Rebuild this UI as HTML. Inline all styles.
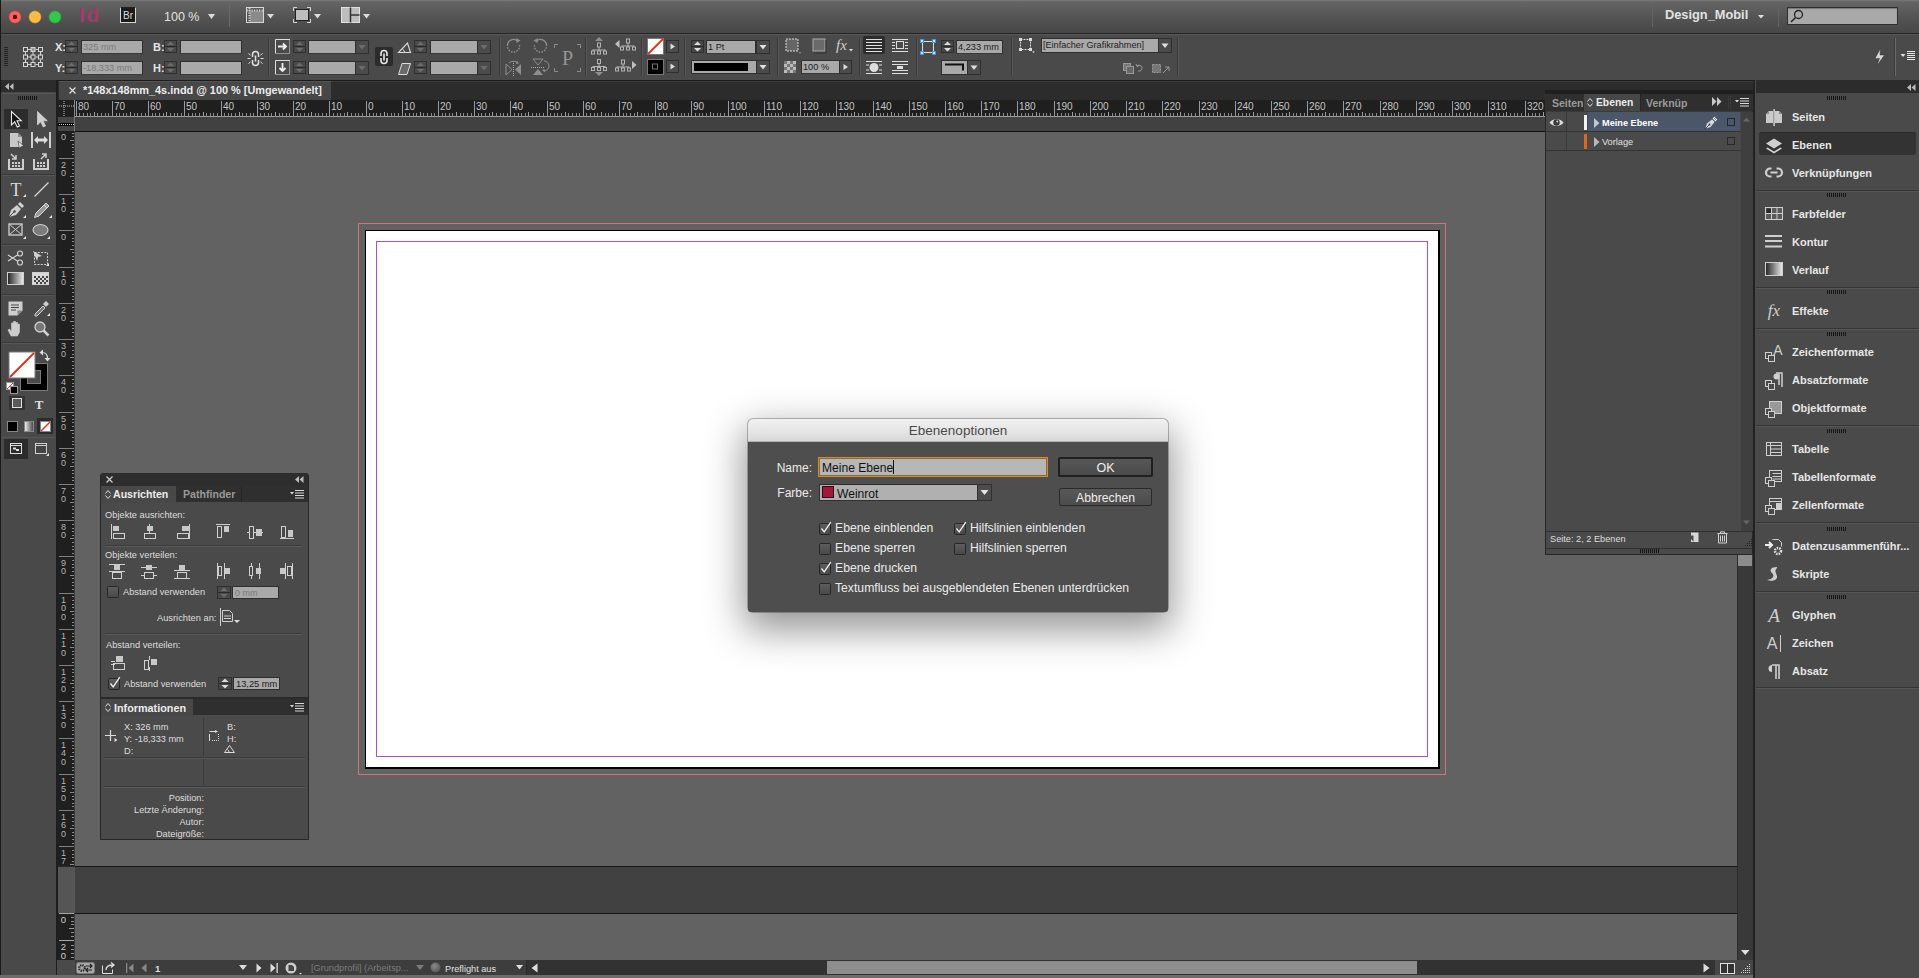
<!DOCTYPE html>
<html><head><meta charset="utf-8"><style>
*{margin:0;padding:0;box-sizing:border-box}
html,body{width:1919px;height:978px;overflow:hidden;background:#626262;font-family:"Liberation Sans",sans-serif;color:#ddd}
.a{position:absolute}
.t{position:absolute;white-space:nowrap;line-height:1}
svg{position:absolute;overflow:visible}
</style></head><body>
<div class="a" style="left:0px;top:0px;width:1919px;height:33px;background:linear-gradient(#7a7a7a 0px,#646464 2px,#5c5c5c 30%,#505050 65%,#474747 100%)"></div>
<div class="a" style="left:0px;top:33px;width:1919px;height:1px;background:#242424"></div>
<div class="a" style="left:0px;top:34px;width:1919px;height:46px;background:#4a4a4a;border-top:1px solid #585858"></div>
<div class="a" style="left:0px;top:80px;width:57px;height:898px;background:#494949;border-right:1px solid #262626;border-left:1px solid #1e1e1e"></div>
<div class="a" style="left:1px;top:80px;width:55px;height:12px;background:#2c2c2c"></div>
<svg style="left:5px;top:83px;" width="9" height="7" viewBox="0 0 9 7"><path d="M4 0L0 3.5L4 7z M8.5 0L4.5 3.5L8.5 7z" fill="#bbb"/></svg>
<div class="a" style="left:2px;top:93px;width:53px;height:1px;background:#575757"></div>
<svg style="left:18px;top:96px;" width="21" height="5" viewBox="0 0 21 5"><rect x="0" y="0" width="1" height="4" fill="#151515"/><rect x="2" y="0" width="1" height="4" fill="#151515"/><rect x="4" y="0" width="1" height="4" fill="#151515"/><rect x="6" y="0" width="1" height="4" fill="#151515"/><rect x="8" y="0" width="1" height="4" fill="#151515"/><rect x="10" y="0" width="1" height="4" fill="#151515"/><rect x="12" y="0" width="1" height="4" fill="#151515"/><rect x="14" y="0" width="1" height="4" fill="#151515"/><rect x="16" y="0" width="1" height="4" fill="#151515"/><rect x="18" y="0" width="1" height="4" fill="#151515"/></svg>
<div class="a" style="left:4px;top:109px;width:24px;height:20px;background:#2c2c2c"></div>
<svg style="left:9px;top:110px;" width="14" height="18" viewBox="0 0 14 18"><path d="M2.5 1.5v13.5l3.2-3.2 2.6 5.2 2.2-1.1-2.5-5.1h4.3z" fill="#111" stroke="#e6e6e6" stroke-width="1.1"/></svg>
<svg style="left:35px;top:110px;" width="14" height="18" viewBox="0 0 14 18"><path d="M2.5 1.5v13.5l3.2-3.2 2.6 5.2 2.2-1.1-2.5-5.1h4.3z" fill="#cfcfcf" stroke="#cfcfcf" stroke-width="0.8"/></svg>
<svg style="left:9px;top:132px;" width="16" height="17" viewBox="0 0 16 17"><path d="M1 1h8l4 4v10H1z" fill="#c8c8c8"/><path d="M9 1v4h4" fill="#8a8a8a"/><path d="M9 9l6 5-3 0.5-1.5 2.5z" fill="#e0e0e0" stroke="#333" stroke-width="0.6"/></svg>
<svg style="left:30px;top:132px;" width="22" height="16" viewBox="0 0 22 16"><rect x="1" y="0" width="2" height="16" fill="#cfcfcf"/><rect x="19" y="0" width="2" height="16" fill="#cfcfcf"/><path d="M4 8l4-4v2.5h6V4l4 4-4 4V9.5H8V12z" fill="#dcdcdc"/></svg>
<svg style="left:8px;top:153px;" width="16" height="17" viewBox="0 0 16 17"><path d="M1 6v10h14V6" fill="none" stroke="#cfcfcf" stroke-width="2"/><rect x="4" y="9" width="2" height="2" fill="#cfcfcf"/><rect x="7" y="9" width="2" height="2" fill="#cfcfcf"/><rect x="10" y="9" width="2" height="2" fill="#cfcfcf"/><rect x="4" y="12" width="2" height="2" fill="#cfcfcf"/><rect x="7" y="12" width="2" height="2" fill="#cfcfcf"/><rect x="10" y="12" width="2" height="2" fill="#cfcfcf"/><path d="M3 1l4.5 4.5 M4 6h4V2" stroke="#cfcfcf" stroke-width="1.5" fill="none"/></svg>
<svg style="left:33px;top:153px;" width="16" height="17" viewBox="0 0 16 17"><path d="M1 6v10h14V6" fill="none" stroke="#cfcfcf" stroke-width="2"/><rect x="4" y="9" width="2" height="2" fill="#cfcfcf"/><rect x="7" y="9" width="2" height="2" fill="#cfcfcf"/><rect x="10" y="9" width="2" height="2" fill="#cfcfcf"/><rect x="4" y="12" width="2" height="2" fill="#cfcfcf"/><rect x="7" y="12" width="2" height="2" fill="#cfcfcf"/><rect x="10" y="12" width="2" height="2" fill="#cfcfcf"/><path d="M8 6l5-5 M9 1h4v4" stroke="#cfcfcf" stroke-width="1.5" fill="none"/></svg>
<div class="a" style="left:2px;top:174px;width:53px;height:1px;background:#393939;border-bottom:1px solid #565656;height:2px"></div>
<svg style="left:8px;top:181px;" width="18" height="17" viewBox="0 0 18 17"><text x="8" y="14.5" font-family="Liberation Serif" font-size="18" text-anchor="middle" fill="#d8d8d8">T</text><path d="M15 16h3v-3z" fill="#e8e8e8"/></svg>
<svg style="left:33px;top:181px;" width="17" height="17" viewBox="0 0 17 17"><path d="M1.5 15.5L15.5 1.5" stroke="#d8d8d8" stroke-width="1.3"/></svg>
<svg style="left:7px;top:201px;" width="20" height="18" viewBox="0 0 20 18"><path d="M2 16L4 9l6-5 4 4-5 6z" fill="#cfcfcf"/><path d="M11 3l2-2 4 4-2 2z" fill="#d8d8d8"/><path d="M2 16l5-5" stroke="#444" stroke-width="1"/><circle cx="7.5" cy="10.5" r="1.2" fill="#444"/><path d="M16 17h3v-3z" fill="#e8e8e8"/></svg>
<svg style="left:33px;top:201px;" width="20" height="18" viewBox="0 0 20 18"><path d="M1.5 16.5l1.5-4.5L13 2l3 3L6 15z" fill="#999" stroke="#d8d8d8" stroke-width="1"/><path d="M11 4l3 3" stroke="#d8d8d8"/><path d="M16 17h3v-3z" fill="#e8e8e8"/></svg>
<svg style="left:8px;top:223px;" width="19" height="17" viewBox="0 0 19 17"><rect x="1" y="1" width="13" height="11" fill="none" stroke="#d0d0d0" stroke-width="1.3"/><path d="M1 1l13 11 M14 1L1 12" stroke="#d0d0d0" stroke-width="1"/><path d="M15 16h3v-3z" fill="#e8e8e8"/></svg>
<svg style="left:32px;top:223px;" width="19" height="17" viewBox="0 0 19 17"><ellipse cx="8.5" cy="7" rx="7.5" ry="5.5" fill="#7c7c7c" stroke="#d0d0d0" stroke-width="1.1"/><path d="M15 16h3v-3z" fill="#e8e8e8"/></svg>
<div class="a" style="left:2px;top:244px;width:53px;height:2px;background:#393939;border-bottom:1px solid #565656"></div>
<svg style="left:7px;top:250px;" width="17" height="16" viewBox="0 0 17 16"><circle cx="13" cy="3.5" r="2.5" fill="none" stroke="#d0d0d0" stroke-width="1.2"/><circle cx="13" cy="12.5" r="2.5" fill="none" stroke="#d0d0d0" stroke-width="1.2"/><path d="M10.8 4.8L1 11 M10.8 11.2L1 5" stroke="#d0d0d0" stroke-width="1.2"/></svg>
<svg style="left:32px;top:250px;" width="18" height="17" viewBox="0 0 18 17"><rect x="2.5" y="2.5" width="13" height="12" fill="none" stroke="#d0d0d0" stroke-dasharray="2 1.3"/><path d="M1 1l9 5-4 1-1 4z" fill="#cfcfcf"/><path d="M14 16h3v-3z" fill="#e8e8e8"/></svg>
<svg style="left:7px;top:272px;" width="17" height="14" viewBox="0 0 17 14"><defs><linearGradient id="gt" x1="0" x2="1"><stop offset="0" stop-color="#222"/><stop offset="1" stop-color="#eee"/></linearGradient></defs><rect x="0.5" y="0.5" width="16" height="12" fill="url(#gt)" stroke="#d0d0d0"/></svg>
<svg style="left:32px;top:272px;" width="17" height="14" viewBox="0 0 17 14"><rect x="0.5" y="0.5" width="16" height="12" fill="#d8d8d8" stroke="#d0d0d0"/><path d="M2 4h2v2H2z M6 4h2v2H6z M10 4h2v2h-2z M14 4h2v2h-2z M4 6h2v2H4z M8 6h2v2H8z M12 6h2v2h-2z M2 8h2v2H2z M6 8h2v2H6z M10 8h2v2h-2z M14 8h2v2h-2z M4 10h2v2H4z M8 10h2v2H8z M12 10h2v2h-2z" fill="#444"/></svg>
<div class="a" style="left:2px;top:294px;width:53px;height:2px;background:#393939;border-bottom:1px solid #565656"></div>
<svg style="left:8px;top:301px;" width="16" height="15" viewBox="0 0 16 15"><path d="M0.5 0.5h14v9l-5 5h-9z" fill="#cfcfcf"/><path d="M3 4h8 M3 6.5h8 M3 9h5" stroke="#444"/><path d="M9.5 14.5v-5h5" fill="#888"/></svg>
<svg style="left:33px;top:299px;" width="17" height="18" viewBox="0 0 17 18"><path d="M2 15l8-8 2 2-8 8H2z" fill="#777" stroke="#d0d0d0"/><path d="M10 5l3-3 3 3-3 3z" fill="#d0d0d0"/><path d="M14 17h3v-3z" fill="#e8e8e8"/></svg>
<svg style="left:7px;top:320px;" width="17" height="17" viewBox="0 0 17 17"><path d="M4 16l-3-6 1.5-1 2 2.5V3h2v6V1.5h2V9V2.5h2V9V4h2v8l-2 4z" fill="#cdcdcd" stroke="#cdcdcd" stroke-width="0.6" stroke-linejoin="round"/></svg>
<svg style="left:33px;top:320px;" width="17" height="17" viewBox="0 0 17 17"><circle cx="7" cy="7" r="5" fill="#777" stroke="#d0d0d0" stroke-width="1.3"/><path d="M10.5 10.5L15.5 15.5" stroke="#d0d0d0" stroke-width="2.5"/></svg>
<div class="a" style="left:2px;top:342px;width:53px;height:2px;background:#393939;border-bottom:1px solid #565656"></div>
<svg style="left:5px;top:348px;" width="48" height="48" viewBox="0 0 48 48"><rect x="15.5" y="15.5" width="27" height="27" fill="#000" stroke="#7a7a7a" stroke-width="1"/><rect x="22.5" y="22.5" width="13" height="13" fill="#4a4a4a" stroke="#7a7a7a"/><rect x="3.5" y="3.5" width="27" height="27" fill="#7a7a7a"/><rect x="4.5" y="4.5" width="25" height="25" fill="#fff"/><path d="M5 29L29 5" stroke="#e0301e" stroke-width="2"/><path d="M37 4.5q5.5 0 5.5 6" stroke="#ddd" fill="none" stroke-width="1.2"/><path d="M34.5 4.5l3.5-3v6z M42.5 13.5l-3-3.5h6z" fill="#ddd"/><rect x="1.5" y="34.5" width="7" height="7" fill="#fff" stroke="#999"/><path d="M2 41l6-6" stroke="#e0301e"/><rect x="5.5" y="38.5" width="7" height="7" fill="#000" stroke="#999"/></svg>
<div class="a" style="left:9px;top:396px;width:16px;height:14px;background:#333"></div>
<svg style="left:12px;top:398px;" width="11" height="10" viewBox="0 0 11 10"><rect x="0.5" y="0.5" width="9" height="9" fill="#5a5a5a" stroke="#e0e0e0"/></svg>
<svg style="left:33px;top:398px;" width="12" height="12" viewBox="0 0 12 12"><text x="6" y="10.5" font-family="Liberation Serif" font-weight="bold" font-size="13" text-anchor="middle" fill="#e0e0e0">T</text></svg>
<svg style="left:7px;top:421px;" width="11" height="11" viewBox="0 0 11 11"><rect x="0.5" y="0.5" width="10" height="10" fill="#000" stroke="#888"/></svg>
<svg style="left:24px;top:421px;" width="10" height="11" viewBox="0 0 10 11"><defs><linearGradient id="ga" x1="0" x2="1"><stop offset="0" stop-color="#f4f4f4"/><stop offset="1" stop-color="#444"/></linearGradient></defs><rect x="0.5" y="0.5" width="9" height="10" fill="url(#ga)" stroke="#888"/></svg>
<div class="a" style="left:37px;top:418px;width:16px;height:16px;background:#2c2c2c"></div>
<svg style="left:40px;top:421px;" width="11" height="11" viewBox="0 0 11 11"><rect x="0.5" y="0.5" width="10" height="10" fill="#fff" stroke="#888"/><path d="M1 10L10 1" stroke="#e0301e" stroke-width="1.5"/></svg>
<div class="a" style="left:2px;top:437px;width:53px;height:1px;background:#565656"></div>
<div class="a" style="left:4px;top:439px;width:24px;height:20px;background:#2c2c2c"></div>
<svg style="left:10px;top:443px;" width="13" height="11" viewBox="0 0 13 11"><rect x="0.5" y="0.5" width="11" height="10" fill="none" stroke="#e0e0e0"/><path d="M0.5 2.5h11" stroke="#e0e0e0"/><rect x="3" y="4.5" width="3" height="2" fill="#e0e0e0"/><rect x="6" y="6" width="3" height="2" fill="#e0e0e0"/></svg>
<svg style="left:35px;top:443px;" width="15" height="14" viewBox="0 0 15 14"><rect x="0.5" y="0.5" width="11" height="10" fill="#444" stroke="#d0d0d0"/><path d="M0.5 2.5h11" stroke="#d0d0d0"/><path d="M11 13h3v-3z" fill="#e0e0e0"/></svg>
<svg style="left:0px;top:0px;" width="70" height="34" viewBox="0 0 70 34"><circle cx="15" cy="17" r="6" fill="#fc615d" stroke="#df4744" stroke-width="0.6"/><circle cx="15" cy="17" r="2.2" fill="#6d0000"/><circle cx="35" cy="17" r="6" fill="#fdbc40" stroke="#de9f34" stroke-width="0.6"/><circle cx="55" cy="17" r="6" fill="#34c84a" stroke="#27aa35" stroke-width="0.6"/></svg>
<div class="a" style="left:0px;top:0px;width:1px;height:978px;background:#1a1a1a"></div>
<div class="t" style="left:79px;top:4px;font-size:21px;color:#a23a6a;font-weight:bold;letter-spacing:1.5px">Id</div>
<div class="a" style="left:120px;top:7px;width:16px;height:16px;background:#1b1b1b;border:1px solid #d6d6d6;border-top-color:#222"></div>
<div class="t" style="left:123px;top:11px;font-size:10px;color:#dcdcdc;font-weight:normal;">Br</div>
<div class="t" style="left:164px;top:11px;font-size:12.5px;color:#e2e2e2;font-weight:normal;">100 %</div>
<svg style="left:208px;top:14px;" width="8" height="6" viewBox="0 0 8 6"><path d="M0 0h7l-3.5 5z" fill="#ddd"/></svg>
<div class="a" style="left:229px;top:5px;width:1px;height:22px;background:#3e3e3e;border-right:1px solid #6a6a6a"></div>
<svg style="left:246px;top:7px;" width="28" height="17" viewBox="0 0 28 17"><rect x="0.5" y="0.5" width="17" height="15" fill="none" stroke="#d8d8d8"/><rect x="4" y="4" width="13" height="11" fill="#8a8a8a"/><path d="M0.5 3.5h17 M3.5 0.5v15" stroke="#d8d8d8" stroke-width="2.2" stroke-dasharray="1.2 1.3"/><path d="M21 7h7l-3.5 4.5z" fill="#ddd"/></svg>
<svg style="left:293px;top:7px;" width="28" height="17" viewBox="0 0 28 17"><path d="M0.5 4V0.5H4 M14 0.5h3.5V4 M17.5 12v3.5H14 M4 15.5H0.5V12" stroke="#d8d8d8" fill="none"/><rect x="2.5" y="2.5" width="13" height="11" fill="#bdbdbd" stroke="#222" stroke-width="1"/><path d="M21 7h7l-3.5 4.5z" fill="#ddd"/></svg>
<svg style="left:341px;top:7px;" width="28" height="17" viewBox="0 0 28 17"><rect x="0.5" y="0.5" width="18" height="15" fill="#bdbdbd" stroke="#e0e0e0"/><path d="M9.5 0.5v15 M9.5 8h9" stroke="#333" stroke-width="1.5"/><path d="M22 7h7l-3.5 4.5z" fill="#ddd"/></svg>
<div class="a" style="left:1652px;top:5px;width:1px;height:22px;background:#3e3e3e;border-right:1px solid #636363"></div>
<div class="t" style="left:1665px;top:9px;font-size:12.8px;color:#e2e2e2;font-weight:bold;">Design_Mobil</div>
<svg style="left:1758px;top:15px;" width="7" height="4" viewBox="0 0 7 4"><path d="M0 0h6l-3 3.5z" fill="#ddd"/></svg>
<div class="a" style="left:1778px;top:5px;width:1px;height:22px;background:#3e3e3e;border-right:1px solid #636363"></div>
<div class="a" style="left:1787px;top:7px;width:111px;height:18px;background:#a9a9a9;border:1px solid #303030;box-shadow:inset 0 1px 1px #777"></div>
<svg style="left:1790px;top:9px;" width="14" height="14" viewBox="0 0 14 14"><circle cx="8.5" cy="5.5" r="4" fill="none" stroke="#222" stroke-width="1.3"/><path d="M5.5 8.5L1 13" stroke="#222" stroke-width="1.5"/></svg>
<svg style="left:4px;top:47px;" width="5" height="20" viewBox="0 0 5 20"><rect x="0" y="0" width="4" height="1" fill="#222"/><rect x="0" y="2" width="4" height="1" fill="#222"/><rect x="0" y="4" width="4" height="1" fill="#222"/><rect x="0" y="6" width="4" height="1" fill="#222"/><rect x="0" y="8" width="4" height="1" fill="#222"/><rect x="0" y="10" width="4" height="1" fill="#222"/><rect x="0" y="12" width="4" height="1" fill="#222"/><rect x="0" y="14" width="4" height="1" fill="#222"/><rect x="0" y="16" width="4" height="1" fill="#222"/><rect x="0" y="18" width="4" height="1" fill="#222"/></svg>
<svg style="left:23px;top:47px;" width="21" height="21" viewBox="0 0 21 21"><rect x="0.5" y="0.5" width="4" height="4" fill="none" stroke="#d4d4d4" stroke-width="1"/><rect x="8.0" y="0.5" width="4" height="4" fill="#9a9a9a" stroke="#d4d4d4" stroke-width="1"/><rect x="15.5" y="0.5" width="4" height="4" fill="none" stroke="#d4d4d4" stroke-width="1"/><rect x="0.5" y="8.0" width="4" height="4" fill="none" stroke="#d4d4d4" stroke-width="1"/><rect x="8.0" y="8.0" width="4" height="4" fill="none" stroke="#d4d4d4" stroke-width="1"/><rect x="15.5" y="8.0" width="4" height="4" fill="none" stroke="#d4d4d4" stroke-width="1"/><rect x="0.5" y="15.5" width="4" height="4" fill="none" stroke="#d4d4d4" stroke-width="1"/><rect x="8.0" y="15.5" width="4" height="4" fill="none" stroke="#d4d4d4" stroke-width="1"/><rect x="15.5" y="15.5" width="4" height="4" fill="none" stroke="#d4d4d4" stroke-width="1"/><path d="M5 2.5h3.5 M12.5 2.5h3.5 M5 10h3.5 M12.5 10h3.5 M5 17.5h3.5 M12.5 17.5h3.5 M2.5 5v3.5 M2.5 12.5v3.5 M10 5v3.5 M10 12.5v3.5 M17.5 5v3.5 M17.5 12.5v3.5" stroke="#d4d4d4"/></svg>
<div class="t" style="left:55px;top:42px;font-size:11px;color:#e4e4e4;font-weight:bold;">X:</div>
<div class="t" style="left:55px;top:63px;font-size:11px;color:#e4e4e4;font-weight:bold;">Y:</div>
<svg style="left:65px;top:40px;" width="13" height="13" viewBox="0 0 13 13"><rect x="0.5" y="0.5" width="12" height="12" fill="#4a4a4a" stroke="#2f2f2f"/><path d="M3.0 5.0L6.5 1.5L10.0 5.0z M3.0 8.0L6.5 11.5L10.0 8.0z" fill="#6d6d6d"/><rect x="1" y="6.0" width="11" height="1" fill="#2a2a2a"/></svg>
<svg style="left:65px;top:61px;" width="13" height="13" viewBox="0 0 13 13"><rect x="0.5" y="0.5" width="12" height="12" fill="#4a4a4a" stroke="#2f2f2f"/><path d="M3.0 5.0L6.5 1.5L10.0 5.0z M3.0 8.0L6.5 11.5L10.0 8.0z" fill="#6d6d6d"/><rect x="1" y="6.0" width="11" height="1" fill="#2a2a2a"/></svg>
<div class="a" style="left:81px;top:40px;width:62px;height:14px;background:#a9a9a9;border:1px solid #2e2e2e;border-bottom-color:#3a3a3a"></div><div class="t" style="left:83px;top:43px;font-size:9.2px;color:#7b7b7b;font-weight:normal;">325 mm</div>
<div class="a" style="left:81px;top:61px;width:62px;height:14px;background:#a9a9a9;border:1px solid #2e2e2e;border-bottom-color:#3a3a3a"></div><div class="t" style="left:83px;top:64px;font-size:9.2px;color:#7b7b7b;font-weight:normal;">-18,333 mm</div>
<div class="t" style="left:153px;top:42px;font-size:11px;color:#e4e4e4;font-weight:bold;">B:</div>
<div class="t" style="left:153px;top:63px;font-size:11px;color:#e4e4e4;font-weight:bold;">H:</div>
<svg style="left:164px;top:40px;" width="13" height="13" viewBox="0 0 13 13"><rect x="0.5" y="0.5" width="12" height="12" fill="#4a4a4a" stroke="#2f2f2f"/><path d="M3.0 5.0L6.5 1.5L10.0 5.0z M3.0 8.0L6.5 11.5L10.0 8.0z" fill="#6d6d6d"/><rect x="1" y="6.0" width="11" height="1" fill="#2a2a2a"/></svg>
<svg style="left:164px;top:61px;" width="13" height="13" viewBox="0 0 13 13"><rect x="0.5" y="0.5" width="12" height="12" fill="#4a4a4a" stroke="#2f2f2f"/><path d="M3.0 5.0L6.5 1.5L10.0 5.0z M3.0 8.0L6.5 11.5L10.0 8.0z" fill="#6d6d6d"/><rect x="1" y="6.0" width="11" height="1" fill="#2a2a2a"/></svg>
<div class="a" style="left:180px;top:40px;width:62px;height:14px;background:#a9a9a9;border:1px solid #2e2e2e;border-bottom-color:#3a3a3a"></div>
<div class="a" style="left:180px;top:61px;width:62px;height:14px;background:#a9a9a9;border:1px solid #2e2e2e;border-bottom-color:#3a3a3a"></div>
<svg style="left:247px;top:50px;" width="17" height="17" viewBox="0 0 17 17"><path d="M5.5 7V4.5a3 3 0 0 1 6 0V7 M5.5 10v2.5a3 3 0 0 0 6 0V10 M8.5 5.5v6" fill="none" stroke="#e0e0e0" stroke-width="1.5"/><path d="M0.5 8.5h3 M13.5 8.5h3 M1.5 3.5l2 1.5 M15.5 3.5l-2 1.5 M1.5 13.5l2-1.5 M15.5 13.5l-2-1.5" stroke="#e0e0e0" stroke-width="1"/></svg>
<div class="a" style="left:268px;top:38px;width:1px;height:38px;background:#3a3a3a;border-right:1px solid #575757;width:2px"></div>
<svg style="left:275px;top:39px;" width="16" height="15" viewBox="0 0 16 15"><path d="M0.5 14.5V0.5h14.5" fill="none" stroke="#ddd"/><path d="M14.5 0.5v14h-14" fill="none" stroke="#ddd" stroke-dasharray="1 1"/><path d="M3 7.5h8 M8 4.5l3 3-3 3" stroke="#eee" stroke-width="1.8" fill="none"/></svg>
<svg style="left:275px;top:60px;" width="16" height="15" viewBox="0 0 16 15"><path d="M0.5 14.5V0.5h14.5" fill="none" stroke="#ddd"/><path d="M14.5 0.5v14h-14" fill="none" stroke="#ddd" stroke-dasharray="1 1"/><path d="M7.5 3v8 M4.5 8l3 3 3-3" stroke="#eee" stroke-width="1.8" fill="none"/></svg>
<svg style="left:293px;top:40px;" width="13" height="13" viewBox="0 0 13 13"><rect x="0.5" y="0.5" width="12" height="12" fill="#4a4a4a" stroke="#2f2f2f"/><path d="M3.0 5.0L6.5 1.5L10.0 5.0z M3.0 8.0L6.5 11.5L10.0 8.0z" fill="#6d6d6d"/><rect x="1" y="6.0" width="11" height="1" fill="#2a2a2a"/></svg>
<svg style="left:293px;top:61px;" width="13" height="13" viewBox="0 0 13 13"><rect x="0.5" y="0.5" width="12" height="12" fill="#4a4a4a" stroke="#2f2f2f"/><path d="M3.0 5.0L6.5 1.5L10.0 5.0z M3.0 8.0L6.5 11.5L10.0 8.0z" fill="#6d6d6d"/><rect x="1" y="6.0" width="11" height="1" fill="#2a2a2a"/></svg>
<div class="a" style="left:308px;top:40px;width:48px;height:14px;background:#a9a9a9;border:1px solid #2e2e2e;border-bottom-color:#3a3a3a"></div>
<svg style="left:355px;top:40px;" width="14" height="14" viewBox="0 0 14 14"><rect x="0.5" y="0.5" width="13" height="13" fill="#4b4b4b" stroke="#2e2e2e"/><path d="M3.5 5.0h7l-3.5 4.5z" fill="#6c6c6c"/></svg>
<div class="a" style="left:308px;top:61px;width:48px;height:14px;background:#a9a9a9;border:1px solid #2e2e2e;border-bottom-color:#3a3a3a"></div>
<svg style="left:355px;top:61px;" width="14" height="14" viewBox="0 0 14 14"><rect x="0.5" y="0.5" width="13" height="13" fill="#4b4b4b" stroke="#2e2e2e"/><path d="M3.5 5.0h7l-3.5 4.5z" fill="#6c6c6c"/></svg>
<div class="a" style="left:375px;top:47px;width:18px;height:19px;background:#2b2b2b;border-radius:2px"></div>
<svg style="left:378px;top:49px;" width="12" height="16" viewBox="0 0 12 16"><path d="M3 7V4.5a3 3 0 0 1 6 0V7 M3 9v2.5a3 3 0 0 0 6 0V9 M6 4.5v7" fill="none" stroke="#e6e6e6" stroke-width="1.6"/></svg>
<svg style="left:398px;top:42px;" width="13" height="11" viewBox="0 0 13 11"><path d="M0.5 10.5h12L9.5 1z" stroke="#ddd" fill="none" stroke-width="1.1"/><path d="M6.5 10.5a4 4 0 0 0-2-3.5" stroke="#ddd" fill="none"/></svg>
<svg style="left:398px;top:63px;" width="13" height="12" viewBox="0 0 13 12"><path d="M4 0.5h8.5L9 11.5H0.5z" fill="#6a6a6a" stroke="#ddd"/></svg>
<svg style="left:414px;top:40px;" width="13" height="13" viewBox="0 0 13 13"><rect x="0.5" y="0.5" width="12" height="12" fill="#4a4a4a" stroke="#2f2f2f"/><path d="M3.0 5.0L6.5 1.5L10.0 5.0z M3.0 8.0L6.5 11.5L10.0 8.0z" fill="#6d6d6d"/><rect x="1" y="6.0" width="11" height="1" fill="#2a2a2a"/></svg>
<svg style="left:414px;top:61px;" width="13" height="13" viewBox="0 0 13 13"><rect x="0.5" y="0.5" width="12" height="12" fill="#4a4a4a" stroke="#2f2f2f"/><path d="M3.0 5.0L6.5 1.5L10.0 5.0z M3.0 8.0L6.5 11.5L10.0 8.0z" fill="#6d6d6d"/><rect x="1" y="6.0" width="11" height="1" fill="#2a2a2a"/></svg>
<div class="a" style="left:430px;top:40px;width:48px;height:14px;background:#a9a9a9;border:1px solid #2e2e2e;border-bottom-color:#3a3a3a"></div>
<svg style="left:477px;top:40px;" width="14" height="14" viewBox="0 0 14 14"><rect x="0.5" y="0.5" width="13" height="13" fill="#4b4b4b" stroke="#2e2e2e"/><path d="M3.5 5.0h7l-3.5 4.5z" fill="#6c6c6c"/></svg>
<div class="a" style="left:430px;top:61px;width:48px;height:14px;background:#a9a9a9;border:1px solid #2e2e2e;border-bottom-color:#3a3a3a"></div>
<svg style="left:477px;top:61px;" width="14" height="14" viewBox="0 0 14 14"><rect x="0.5" y="0.5" width="13" height="13" fill="#4b4b4b" stroke="#2e2e2e"/><path d="M3.5 5.0h7l-3.5 4.5z" fill="#6c6c6c"/></svg>
<div class="a" style="left:499px;top:38px;width:1px;height:38px;background:#3a3a3a;border-right:1px solid #575757;width:2px"></div>
<svg style="left:505px;top:37px;" width="18" height="17" viewBox="0 0 18 17"><path d="M2.5 9a6 6 0 0 1 10-5" stroke="#8e8e8e" fill="none" stroke-width="1.3"/><path d="M11 1l4.5 2.5-4 2.5z" fill="#8e8e8e"/><path d="M14.5 8a6 6 0 0 1-12 2" stroke="#8e8e8e" fill="none" stroke-width="1.3" stroke-dasharray="1.6 1.2"/></svg>
<svg style="left:531px;top:37px;" width="18" height="17" viewBox="0 0 18 17"><path d="M15.5 9a6 6 0 0 0-10-5" stroke="#8e8e8e" fill="none" stroke-width="1.3"/><path d="M7 1L2.5 3.5l4 2.5z" fill="#8e8e8e"/><path d="M3.5 8a6 6 0 0 0 12 2" stroke="#8e8e8e" fill="none" stroke-width="1.3" stroke-dasharray="1.6 1.2"/></svg>
<svg style="left:505px;top:58px;" width="18" height="18" viewBox="0 0 18 18"><path d="M1 6l6 5.5L1 17z" fill="none" stroke="#8e8e8e"/><path d="M16 6l-6 5.5 6 5.5z" fill="#8e8e8e"/><path d="M8.5 3v15" stroke="#aaa" stroke-dasharray="1 1"/><path d="M4 5a5 3 0 0 1 9 0" stroke="#8e8e8e" fill="none"/><path d="M12 2.5l2 3-3 0.5z" fill="#8e8e8e"/></svg>
<svg style="left:531px;top:58px;" width="18" height="18" viewBox="0 0 18 18"><path d="M2 1h10l-5 6z" fill="none" stroke="#8e8e8e"/><path d="M2 17h10l-5-6z" fill="#8e8e8e"/><path d="M0 9.5h14" stroke="#aaa" stroke-dasharray="1 1"/><path d="M13 3a5 5 0 0 1 0 10" stroke="#8e8e8e" fill="none"/><path d="M11 12l3 2.5-0.5-3.5z" fill="#8e8e8e"/></svg>
<svg style="left:554px;top:44px;" width="27" height="28" viewBox="0 0 27 28"><path d="M0.5 4V0.5H4 M23 0.5h3.5V4 M26.5 24v3.5H23 M4 27.5H0.5V24" stroke="#8e8e8e" fill="none"/><text x="13.5" y="21" text-anchor="middle" font-family="Liberation Serif" font-size="20" fill="#949494">P</text></svg>
<div class="a" style="left:585px;top:38px;width:1px;height:38px;background:#3a3a3a;border-right:1px solid #575757;width:2px"></div>
<svg style="left:591px;top:37px;" width="16" height="18" viewBox="0 0 16 18"><path d="M4 4h8L8 0z" fill="#8e8e8e"/><g transform="translate(0 5.5)"><rect x="6.5" y="0.5" width="3" height="4" fill="none" stroke="#b4b4b4"/><path d="M8 4.5v2.5 M2 7.5h12 M2 7v1.5 M8 7v1.5 M14 7v1.5" stroke="#b4b4b4"/><rect x="0.5" y="8.5" width="3" height="3" fill="none" stroke="#b4b4b4"/><rect x="6.5" y="8.5" width="3" height="3" fill="none" stroke="#b4b4b4"/><rect x="12.5" y="8.5" width="3" height="3" fill="none" stroke="#b4b4b4"/></g></svg>
<svg style="left:591px;top:59px;" width="16" height="18" viewBox="0 0 16 18"><g transform="translate(0 0)"><rect x="6.5" y="0.5" width="3" height="4" fill="none" stroke="#b4b4b4"/><path d="M8 4.5v2.5 M2 7.5h12 M2 7v1.5 M8 7v1.5 M14 7v1.5" stroke="#b4b4b4"/><rect x="0.5" y="8.5" width="3" height="3" fill="none" stroke="#b4b4b4"/><rect x="6.5" y="8.5" width="3" height="3" fill="none" stroke="#b4b4b4"/><rect x="12.5" y="8.5" width="3" height="3" fill="none" stroke="#b4b4b4"/></g><path d="M4 13h8l-4 4z" fill="#8e8e8e"/></svg>
<svg style="left:615px;top:38px;" width="22" height="13" viewBox="0 0 22 13"><path d="M0 6l4.5-4v8z" fill="#c0c0c0"/><g transform="translate(5 0.5)"><rect x="6.5" y="0.5" width="3" height="4" fill="none" stroke="#b4b4b4"/><path d="M8 4.5v2.5 M2 7.5h12 M2 7v1.5 M8 7v1.5 M14 7v1.5" stroke="#b4b4b4"/><rect x="0.5" y="8.5" width="3" height="3" fill="none" stroke="#b4b4b4"/><rect x="6.5" y="8.5" width="3" height="3" fill="none" stroke="#b4b4b4"/><rect x="12.5" y="8.5" width="3" height="3" fill="none" stroke="#b4b4b4"/></g></svg>
<svg style="left:615px;top:59px;" width="22" height="13" viewBox="0 0 22 13"><g transform="translate(0 0.5)"><rect x="6.5" y="0.5" width="3" height="4" fill="none" stroke="#b4b4b4"/><path d="M8 4.5v2.5 M2 7.5h12 M2 7v1.5 M8 7v1.5 M14 7v1.5" stroke="#b4b4b4"/><rect x="0.5" y="8.5" width="3" height="3" fill="none" stroke="#b4b4b4"/><rect x="6.5" y="8.5" width="3" height="3" fill="none" stroke="#b4b4b4"/><rect x="12.5" y="8.5" width="3" height="3" fill="none" stroke="#b4b4b4"/></g><path d="M21.5 6l-4.5-4v8z" fill="#c0c0c0"/></svg>
<div class="a" style="left:641px;top:38px;width:1px;height:38px;background:#3a3a3a;border-right:1px solid #575757;width:2px"></div>
<svg style="left:647px;top:38px;" width="17" height="17" viewBox="0 0 17 17"><rect x="0.5" y="0.5" width="16" height="16" fill="#fff" stroke="#777"/><path d="M1 16L16 1" stroke="#e0301e" stroke-width="1.8"/></svg>
<svg style="left:666px;top:40px;" width="13" height="13" viewBox="0 0 13 13"><rect x="0.5" y="0.5" width="12" height="12" fill="#4b4b4b" stroke="#2e2e2e"/><path d="M4.5 3.5L9 6.5L4.5 9.5z" fill="#ddd"/></svg>
<svg style="left:647px;top:59px;" width="17" height="16" viewBox="0 0 17 16"><rect x="0.5" y="0.5" width="16" height="15" fill="#000" stroke="#777"/><rect x="5.5" y="5" width="5" height="5" fill="none" stroke="#777"/></svg>
<svg style="left:666px;top:60px;" width="13" height="13" viewBox="0 0 13 13"><rect x="0.5" y="0.5" width="12" height="12" fill="#4b4b4b" stroke="#2e2e2e"/><path d="M4.5 3.5L9 6.5L4.5 9.5z" fill="#ddd"/></svg>
<div class="a" style="left:684px;top:38px;width:1px;height:38px;background:#3a3a3a;border-right:1px solid #575757;width:2px"></div>
<svg style="left:691px;top:40px;" width="13" height="13" viewBox="0 0 13 13"><rect x="0.5" y="0.5" width="12" height="12" fill="#474747" stroke="#2f2f2f"/><path d="M3.0 5.0L6.5 1.5L10.0 5.0z M3.0 8.0L6.5 11.5L10.0 8.0z" fill="#dcdcdc"/><rect x="1" y="6.0" width="11" height="1" fill="#2a2a2a"/></svg>
<div class="a" style="left:706px;top:40px;width:50px;height:14px;background:#a9a9a9;border:1px solid #2e2e2e;border-bottom-color:#3a3a3a"></div><div class="t" style="left:708px;top:43px;font-size:9.2px;color:#1d1d1d;font-weight:normal;">1 Pt</div>
<svg style="left:756px;top:40px;" width="14" height="14" viewBox="0 0 14 14"><rect x="0.5" y="0.5" width="13" height="13" fill="#4b4b4b" stroke="#2e2e2e"/><path d="M3.5 5.0h7l-3.5 4.5z" fill="#e0e0e0"/></svg>
<div class="a" style="left:691px;top:60px;width:66px;height:14px;background:#a9a9a9;border:1px solid #2e2e2e"></div>
<div class="a" style="left:694px;top:63px;width:54px;height:8px;background:#000"></div>
<svg style="left:756px;top:60px;" width="14" height="14" viewBox="0 0 14 14"><rect x="0.5" y="0.5" width="13" height="13" fill="#4b4b4b" stroke="#2e2e2e"/><path d="M3.5 5.0h7l-3.5 4.5z" fill="#e0e0e0"/></svg>
<div class="a" style="left:777px;top:38px;width:1px;height:38px;background:#3a3a3a;border-right:1px solid #575757;width:2px"></div>
<svg style="left:785px;top:38px;" width="17" height="16" viewBox="0 0 17 16"><rect x="1" y="1" width="12" height="12" fill="#666" stroke="#ddd" stroke-dasharray="2 1"/><path d="M14 14.5h2l-1 1z" fill="#ddd"/></svg>
<svg style="left:812px;top:38px;" width="16" height="16" viewBox="0 0 16 16"><rect x="1" y="1" width="12" height="12" fill="#6a6a6a" stroke="#aaa"/><path d="M14 2v13H2" stroke="#333" stroke-width="1.5" fill="none" opacity="0.7"/></svg>
<div class="t" style="left:836px;top:38px;font-size:15px;color:#cfcfcf;font-weight:normal;font-style:italic;font-family:'Liberation Serif'">fx</div>
<svg style="left:849px;top:49px;" width="4" height="3" viewBox="0 0 4 3"><path d="M0 0h4l-2 2.5z" fill="#ddd"/></svg>
<svg style="left:784px;top:61px;" width="12" height="12" viewBox="0 0 12 12"><rect x="0" y="0" width="12" height="12" fill="#bbb"/><path d="M0 0h3v3H0z M6 0h3v3H6z M3 3h3v3H3z M9 3h3v3H9z M0 6h3v3H0z M6 6h3v3H6z M3 9h3v3H3z M9 9h3v3H9z" fill="#777"/></svg>
<div class="a" style="left:801px;top:60px;width:39px;height:14px;background:#a9a9a9;border:1px solid #2e2e2e;border-bottom-color:#3a3a3a"></div><div class="t" style="left:803px;top:63px;font-size:9.2px;color:#1d1d1d;font-weight:normal;">100 %</div>
<svg style="left:839px;top:60px;" width="13" height="14" viewBox="0 0 13 14"><rect x="0.5" y="0.5" width="12" height="13" fill="#4b4b4b" stroke="#2e2e2e"/><path d="M4.5 4L9 7L4.5 10z" fill="#ddd"/></svg>
<div class="a" style="left:859px;top:38px;width:1px;height:38px;background:#3a3a3a;border-right:1px solid #575757;width:2px"></div>
<div class="a" style="left:863px;top:36px;width:22px;height:18px;background:#2c2c2c;border-radius:2px"></div>
<svg style="left:866px;top:38px;" width="16" height="14" viewBox="0 0 16 14"><path d="M0 1.5h16 M0 4.5h16 M0 7.5h16 M0 10.5h16 M0 13.5h16" stroke="#e0e0e0" stroke-width="1.2"/></svg>
<svg style="left:892px;top:38px;" width="16" height="14" viewBox="0 0 16 14"><path d="M0 1.5h16 M0 13.5h16 M0 4.5h3 M13 4.5h3 M0 7.5h3 M13 7.5h3 M0 10.5h3 M13 10.5h3" stroke="#ddd" stroke-width="1.2"/><rect x="4.5" y="3.5" width="7" height="7" fill="none" stroke="#ddd"/></svg>
<svg style="left:866px;top:60px;" width="16" height="15" viewBox="0 0 16 15"><path d="M0 1.5h16 M0 13.5h16" stroke="#ddd" stroke-width="1.2"/><circle cx="8" cy="7.5" r="4.5" fill="#ddd"/><path d="M0 5h3 M13 5h3 M0 10h3 M13 10h3" stroke="#ddd"/></svg>
<svg style="left:892px;top:60px;" width="16" height="15" viewBox="0 0 16 15"><path d="M0 1.5h16 M0 4.5h16 M0 10.5h16 M0 13.5h16" stroke="#ddd" stroke-width="1.2"/><rect x="5" y="6" width="6" height="3" fill="#ddd"/></svg>
<div class="a" style="left:916px;top:38px;width:1px;height:38px;background:#3a3a3a;border-right:1px solid #575757;width:2px"></div>
<svg style="left:920px;top:39px;" width="16" height="16" viewBox="0 0 16 16"><rect x="2.5" y="2.5" width="11" height="11" fill="none" stroke="#ddd"/><rect x="0" y="0" width="4" height="4" fill="#3d9ae8"/><rect x="12" y="0" width="4" height="4" fill="#3d9ae8"/><rect x="0" y="12" width="4" height="4" fill="#3d9ae8"/><rect x="12" y="12" width="4" height="4" fill="#3d9ae8"/><rect x="1" y="1" width="2" height="2" fill="#bfe0ff"/><rect x="13" y="1" width="2" height="2" fill="#bfe0ff"/><rect x="1" y="13" width="2" height="2" fill="#bfe0ff"/><rect x="13" y="13" width="2" height="2" fill="#bfe0ff"/></svg>
<svg style="left:941px;top:40px;" width="13" height="13" viewBox="0 0 13 13"><rect x="0.5" y="0.5" width="12" height="12" fill="#474747" stroke="#2f2f2f"/><path d="M3.0 5.0L6.5 1.5L10.0 5.0z M3.0 8.0L6.5 11.5L10.0 8.0z" fill="#dcdcdc"/><rect x="1" y="6.0" width="11" height="1" fill="#2a2a2a"/></svg>
<div class="a" style="left:956px;top:40px;width:47px;height:14px;background:#a9a9a9;border:1px solid #2e2e2e;border-bottom-color:#3a3a3a"></div><div class="t" style="left:958px;top:43px;font-size:9.2px;color:#1d1d1d;font-weight:normal;">4,233 mm</div>
<svg style="left:941px;top:60px;" width="40" height="15" viewBox="0 0 40 15"><rect x="0.5" y="0.5" width="26" height="14" fill="#a9a9a9" stroke="#2e2e2e"/><path d="M4 4.5h18v6" stroke="#111" stroke-width="2" fill="none"/><rect x="26.5" y="0.5" width="13" height="14" fill="#4b4b4b" stroke="#2e2e2e"/><path d="M29.5 5.5h7l-3.5 4.5z" fill="#ddd"/></svg>
<div class="a" style="left:1011px;top:38px;width:1px;height:38px;background:#3a3a3a;border-right:1px solid #575757;width:2px"></div>
<svg style="left:1019px;top:38px;" width="18" height="16" viewBox="0 0 18 16"><rect x="1.5" y="1.5" width="10" height="10" fill="none" stroke="#ddd" stroke-dasharray="2 1"/><rect x="0" y="0" width="3" height="3" fill="#ddd"/><rect x="10" y="0" width="3" height="3" fill="#ddd"/><rect x="0" y="10" width="3" height="3" fill="#ddd"/><rect x="10" y="10" width="3" height="3" fill="#ddd"/><path d="M13 13.5h3l-1.5 1.5z" fill="#ddd"/></svg>
<div class="a" style="left:1041px;top:38px;width:131px;height:15px;background:#a9a9a9;border:1px solid #2e2e2e"></div>
<div class="t" style="left:1043px;top:41px;font-size:9.1px;color:#1d1d1d;font-weight:normal;">[Einfacher Grafikrahmen]</div>
<svg style="left:1158px;top:38px;" width="14" height="15" viewBox="0 0 14 15"><rect x="0.5" y="0.5" width="13" height="14" fill="#4b4b4b" stroke="#2e2e2e"/><path d="M3.5 5.5h7l-3.5 4.5z" fill="#e0e0e0"/></svg>
<svg style="left:1122px;top:62px;" width="24" height="13" viewBox="0 0 24 13"><rect x="1.5" y="1.5" width="7" height="7" fill="#777" stroke="#999"/><rect x="4.5" y="4.5" width="7" height="7" fill="#666" stroke="#999"/><path d="M16 9a3 3 0 1 0-1-5 M14 2l1 2.5 2.5-1" stroke="#999" fill="none"/></svg>
<svg style="left:1151px;top:62px;" width="20" height="13" viewBox="0 0 20 13"><rect x="1.5" y="2.5" width="8" height="8" fill="#777" stroke="#999" stroke-dasharray="2 1"/><path d="M12 11l6-6 M14 5h4v4" stroke="#999" fill="none"/></svg>
<div class="a" style="left:1177px;top:38px;width:1px;height:38px;background:#3a3a3a;border-right:1px solid #575757;width:2px"></div>
<svg style="left:1874px;top:48px;" width="12" height="18" viewBox="0 0 12 18"><path d="M6.5 0.5L1 10.5h4.5L3 17.5 10.5 7H6z" fill="#d8d8d8" stroke="#222" stroke-width="0.4"/></svg>
<div class="a" style="left:1894px;top:38px;width:1px;height:38px;background:#6a6a6a;border-left:1px solid #3a3a3a;width:2px"></div>
<svg style="left:1900px;top:51px;" width="16" height="10" viewBox="0 0 16 10"><path d="M0.5 3h5l-2.5 3z" fill="#e0e0e0"/><path d="M7 0.5h8 M7 2.5h8 M7 4.5h8 M7 6.5h8 M7 8.5h8" stroke="#e8e8e8" stroke-width="1"/></svg>
<div class="a" style="left:57px;top:80px;width:1697px;height:20px;background:#2c2c2c;border-top:1px solid #1c1c1c"></div>
<div class="a" style="left:57px;top:81px;width:1697px;height:1px;background:#3a3a3a"></div>
<div class="a" style="left:59px;top:81px;width:272px;height:19px;background:#474747;border-top:1px solid #555"></div>
<svg style="left:69px;top:87px;" width="7" height="7" viewBox="0 0 7 7"><path d="M0.5 0.5l6 6 M6.5 0.5l-6 6" stroke="#e0e0e0" stroke-width="1.2"/></svg>
<div class="t" style="left:83px;top:85px;font-size:10.9px;color:#ececec;font-weight:bold;">*148x148mm_4s.indd @ 100 % [Umgewandelt]</div>
<svg style="left:58px;top:100px;" width="1488" height="17" viewBox="0 0 1488 17"><rect x="0" y="0" width="1488" height="17" fill="#1f1f1f"/><rect x="0" y="16" width="1488" height="1" fill="#9d9d9d"/><rect x="18" y="1" width="1" height="15" fill="#9a9a9a"/><text x="20" y="10" font-size="10" fill="#c4c4c4" font-family="Liberation Sans">80</text><rect x="21" y="13" width="1" height="3" fill="#8c8c8c"/><rect x="25" y="13" width="1" height="3" fill="#8c8c8c"/><rect x="29" y="13" width="1" height="3" fill="#8c8c8c"/><rect x="32" y="13" width="1" height="3" fill="#8c8c8c"/><rect x="36" y="12" width="1" height="4" fill="#a0a0a0"/><rect x="39" y="13" width="1" height="3" fill="#8c8c8c"/><rect x="43" y="13" width="1" height="3" fill="#8c8c8c"/><rect x="47" y="13" width="1" height="3" fill="#8c8c8c"/><rect x="50" y="13" width="1" height="3" fill="#8c8c8c"/><rect x="54" y="1" width="1" height="15" fill="#9a9a9a"/><text x="56" y="10" font-size="10" fill="#c4c4c4" font-family="Liberation Sans">70</text><rect x="58" y="13" width="1" height="3" fill="#8c8c8c"/><rect x="61" y="13" width="1" height="3" fill="#8c8c8c"/><rect x="65" y="13" width="1" height="3" fill="#8c8c8c"/><rect x="68" y="13" width="1" height="3" fill="#8c8c8c"/><rect x="72" y="12" width="1" height="4" fill="#a0a0a0"/><rect x="76" y="13" width="1" height="3" fill="#8c8c8c"/><rect x="79" y="13" width="1" height="3" fill="#8c8c8c"/><rect x="83" y="13" width="1" height="3" fill="#8c8c8c"/><rect x="87" y="13" width="1" height="3" fill="#8c8c8c"/><rect x="90" y="1" width="1" height="15" fill="#9a9a9a"/><text x="92" y="10" font-size="10" fill="#c4c4c4" font-family="Liberation Sans">60</text><rect x="94" y="13" width="1" height="3" fill="#8c8c8c"/><rect x="97" y="13" width="1" height="3" fill="#8c8c8c"/><rect x="101" y="13" width="1" height="3" fill="#8c8c8c"/><rect x="105" y="13" width="1" height="3" fill="#8c8c8c"/><rect x="108" y="12" width="1" height="4" fill="#a0a0a0"/><rect x="112" y="13" width="1" height="3" fill="#8c8c8c"/><rect x="116" y="13" width="1" height="3" fill="#8c8c8c"/><rect x="119" y="13" width="1" height="3" fill="#8c8c8c"/><rect x="123" y="13" width="1" height="3" fill="#8c8c8c"/><rect x="126" y="1" width="1" height="15" fill="#9a9a9a"/><text x="128" y="10" font-size="10" fill="#c4c4c4" font-family="Liberation Sans">50</text><rect x="130" y="13" width="1" height="3" fill="#8c8c8c"/><rect x="134" y="13" width="1" height="3" fill="#8c8c8c"/><rect x="137" y="13" width="1" height="3" fill="#8c8c8c"/><rect x="141" y="13" width="1" height="3" fill="#8c8c8c"/><rect x="145" y="12" width="1" height="4" fill="#a0a0a0"/><rect x="148" y="13" width="1" height="3" fill="#8c8c8c"/><rect x="152" y="13" width="1" height="3" fill="#8c8c8c"/><rect x="155" y="13" width="1" height="3" fill="#8c8c8c"/><rect x="159" y="13" width="1" height="3" fill="#8c8c8c"/><rect x="163" y="1" width="1" height="15" fill="#9a9a9a"/><text x="165" y="10" font-size="10" fill="#c4c4c4" font-family="Liberation Sans">40</text><rect x="166" y="13" width="1" height="3" fill="#8c8c8c"/><rect x="170" y="13" width="1" height="3" fill="#8c8c8c"/><rect x="173" y="13" width="1" height="3" fill="#8c8c8c"/><rect x="177" y="13" width="1" height="3" fill="#8c8c8c"/><rect x="181" y="12" width="1" height="4" fill="#a0a0a0"/><rect x="184" y="13" width="1" height="3" fill="#8c8c8c"/><rect x="188" y="13" width="1" height="3" fill="#8c8c8c"/><rect x="192" y="13" width="1" height="3" fill="#8c8c8c"/><rect x="195" y="13" width="1" height="3" fill="#8c8c8c"/><rect x="199" y="1" width="1" height="15" fill="#9a9a9a"/><text x="201" y="10" font-size="10" fill="#c4c4c4" font-family="Liberation Sans">30</text><rect x="202" y="13" width="1" height="3" fill="#8c8c8c"/><rect x="206" y="13" width="1" height="3" fill="#8c8c8c"/><rect x="210" y="13" width="1" height="3" fill="#8c8c8c"/><rect x="213" y="13" width="1" height="3" fill="#8c8c8c"/><rect x="217" y="12" width="1" height="4" fill="#a0a0a0"/><rect x="221" y="13" width="1" height="3" fill="#8c8c8c"/><rect x="224" y="13" width="1" height="3" fill="#8c8c8c"/><rect x="228" y="13" width="1" height="3" fill="#8c8c8c"/><rect x="231" y="13" width="1" height="3" fill="#8c8c8c"/><rect x="235" y="1" width="1" height="15" fill="#9a9a9a"/><text x="237" y="10" font-size="10" fill="#c4c4c4" font-family="Liberation Sans">20</text><rect x="239" y="13" width="1" height="3" fill="#8c8c8c"/><rect x="242" y="13" width="1" height="3" fill="#8c8c8c"/><rect x="246" y="13" width="1" height="3" fill="#8c8c8c"/><rect x="250" y="13" width="1" height="3" fill="#8c8c8c"/><rect x="253" y="12" width="1" height="4" fill="#a0a0a0"/><rect x="257" y="13" width="1" height="3" fill="#8c8c8c"/><rect x="260" y="13" width="1" height="3" fill="#8c8c8c"/><rect x="264" y="13" width="1" height="3" fill="#8c8c8c"/><rect x="268" y="13" width="1" height="3" fill="#8c8c8c"/><rect x="271" y="1" width="1" height="15" fill="#9a9a9a"/><text x="273" y="10" font-size="10" fill="#c4c4c4" font-family="Liberation Sans">10</text><rect x="275" y="13" width="1" height="3" fill="#8c8c8c"/><rect x="279" y="13" width="1" height="3" fill="#8c8c8c"/><rect x="282" y="13" width="1" height="3" fill="#8c8c8c"/><rect x="286" y="13" width="1" height="3" fill="#8c8c8c"/><rect x="289" y="12" width="1" height="4" fill="#a0a0a0"/><rect x="293" y="13" width="1" height="3" fill="#8c8c8c"/><rect x="297" y="13" width="1" height="3" fill="#8c8c8c"/><rect x="300" y="13" width="1" height="3" fill="#8c8c8c"/><rect x="304" y="13" width="1" height="3" fill="#8c8c8c"/><rect x="308" y="1" width="1" height="15" fill="#9a9a9a"/><text x="310" y="10" font-size="10" fill="#c4c4c4" font-family="Liberation Sans">0</text><rect x="311" y="13" width="1" height="3" fill="#8c8c8c"/><rect x="315" y="13" width="1" height="3" fill="#8c8c8c"/><rect x="318" y="13" width="1" height="3" fill="#8c8c8c"/><rect x="322" y="13" width="1" height="3" fill="#8c8c8c"/><rect x="326" y="12" width="1" height="4" fill="#a0a0a0"/><rect x="329" y="13" width="1" height="3" fill="#8c8c8c"/><rect x="333" y="13" width="1" height="3" fill="#8c8c8c"/><rect x="336" y="13" width="1" height="3" fill="#8c8c8c"/><rect x="340" y="13" width="1" height="3" fill="#8c8c8c"/><rect x="344" y="1" width="1" height="15" fill="#9a9a9a"/><text x="346" y="10" font-size="10" fill="#c4c4c4" font-family="Liberation Sans">10</text><rect x="347" y="13" width="1" height="3" fill="#8c8c8c"/><rect x="351" y="13" width="1" height="3" fill="#8c8c8c"/><rect x="355" y="13" width="1" height="3" fill="#8c8c8c"/><rect x="358" y="13" width="1" height="3" fill="#8c8c8c"/><rect x="362" y="12" width="1" height="4" fill="#a0a0a0"/><rect x="365" y="13" width="1" height="3" fill="#8c8c8c"/><rect x="369" y="13" width="1" height="3" fill="#8c8c8c"/><rect x="373" y="13" width="1" height="3" fill="#8c8c8c"/><rect x="376" y="13" width="1" height="3" fill="#8c8c8c"/><rect x="380" y="1" width="1" height="15" fill="#9a9a9a"/><text x="382" y="10" font-size="10" fill="#c4c4c4" font-family="Liberation Sans">20</text><rect x="384" y="13" width="1" height="3" fill="#8c8c8c"/><rect x="387" y="13" width="1" height="3" fill="#8c8c8c"/><rect x="391" y="13" width="1" height="3" fill="#8c8c8c"/><rect x="394" y="13" width="1" height="3" fill="#8c8c8c"/><rect x="398" y="12" width="1" height="4" fill="#a0a0a0"/><rect x="402" y="13" width="1" height="3" fill="#8c8c8c"/><rect x="405" y="13" width="1" height="3" fill="#8c8c8c"/><rect x="409" y="13" width="1" height="3" fill="#8c8c8c"/><rect x="413" y="13" width="1" height="3" fill="#8c8c8c"/><rect x="416" y="1" width="1" height="15" fill="#9a9a9a"/><text x="418" y="10" font-size="10" fill="#c4c4c4" font-family="Liberation Sans">30</text><rect x="420" y="13" width="1" height="3" fill="#8c8c8c"/><rect x="423" y="13" width="1" height="3" fill="#8c8c8c"/><rect x="427" y="13" width="1" height="3" fill="#8c8c8c"/><rect x="431" y="13" width="1" height="3" fill="#8c8c8c"/><rect x="434" y="12" width="1" height="4" fill="#a0a0a0"/><rect x="438" y="13" width="1" height="3" fill="#8c8c8c"/><rect x="442" y="13" width="1" height="3" fill="#8c8c8c"/><rect x="445" y="13" width="1" height="3" fill="#8c8c8c"/><rect x="449" y="13" width="1" height="3" fill="#8c8c8c"/><rect x="452" y="1" width="1" height="15" fill="#9a9a9a"/><text x="454" y="10" font-size="10" fill="#c4c4c4" font-family="Liberation Sans">40</text><rect x="456" y="13" width="1" height="3" fill="#8c8c8c"/><rect x="460" y="13" width="1" height="3" fill="#8c8c8c"/><rect x="463" y="13" width="1" height="3" fill="#8c8c8c"/><rect x="467" y="13" width="1" height="3" fill="#8c8c8c"/><rect x="470" y="12" width="1" height="4" fill="#a0a0a0"/><rect x="474" y="13" width="1" height="3" fill="#8c8c8c"/><rect x="478" y="13" width="1" height="3" fill="#8c8c8c"/><rect x="481" y="13" width="1" height="3" fill="#8c8c8c"/><rect x="485" y="13" width="1" height="3" fill="#8c8c8c"/><rect x="489" y="1" width="1" height="15" fill="#9a9a9a"/><text x="491" y="10" font-size="10" fill="#c4c4c4" font-family="Liberation Sans">50</text><rect x="492" y="13" width="1" height="3" fill="#8c8c8c"/><rect x="496" y="13" width="1" height="3" fill="#8c8c8c"/><rect x="499" y="13" width="1" height="3" fill="#8c8c8c"/><rect x="503" y="13" width="1" height="3" fill="#8c8c8c"/><rect x="507" y="12" width="1" height="4" fill="#a0a0a0"/><rect x="510" y="13" width="1" height="3" fill="#8c8c8c"/><rect x="514" y="13" width="1" height="3" fill="#8c8c8c"/><rect x="518" y="13" width="1" height="3" fill="#8c8c8c"/><rect x="521" y="13" width="1" height="3" fill="#8c8c8c"/><rect x="525" y="1" width="1" height="15" fill="#9a9a9a"/><text x="527" y="10" font-size="10" fill="#c4c4c4" font-family="Liberation Sans">60</text><rect x="528" y="13" width="1" height="3" fill="#8c8c8c"/><rect x="532" y="13" width="1" height="3" fill="#8c8c8c"/><rect x="536" y="13" width="1" height="3" fill="#8c8c8c"/><rect x="539" y="13" width="1" height="3" fill="#8c8c8c"/><rect x="543" y="12" width="1" height="4" fill="#a0a0a0"/><rect x="547" y="13" width="1" height="3" fill="#8c8c8c"/><rect x="550" y="13" width="1" height="3" fill="#8c8c8c"/><rect x="554" y="13" width="1" height="3" fill="#8c8c8c"/><rect x="557" y="13" width="1" height="3" fill="#8c8c8c"/><rect x="561" y="1" width="1" height="15" fill="#9a9a9a"/><text x="563" y="10" font-size="10" fill="#c4c4c4" font-family="Liberation Sans">70</text><rect x="565" y="13" width="1" height="3" fill="#8c8c8c"/><rect x="568" y="13" width="1" height="3" fill="#8c8c8c"/><rect x="572" y="13" width="1" height="3" fill="#8c8c8c"/><rect x="576" y="13" width="1" height="3" fill="#8c8c8c"/><rect x="579" y="12" width="1" height="4" fill="#a0a0a0"/><rect x="583" y="13" width="1" height="3" fill="#8c8c8c"/><rect x="586" y="13" width="1" height="3" fill="#8c8c8c"/><rect x="590" y="13" width="1" height="3" fill="#8c8c8c"/><rect x="594" y="13" width="1" height="3" fill="#8c8c8c"/><rect x="597" y="1" width="1" height="15" fill="#9a9a9a"/><text x="599" y="10" font-size="10" fill="#c4c4c4" font-family="Liberation Sans">80</text><rect x="601" y="13" width="1" height="3" fill="#8c8c8c"/><rect x="605" y="13" width="1" height="3" fill="#8c8c8c"/><rect x="608" y="13" width="1" height="3" fill="#8c8c8c"/><rect x="612" y="13" width="1" height="3" fill="#8c8c8c"/><rect x="615" y="12" width="1" height="4" fill="#a0a0a0"/><rect x="619" y="13" width="1" height="3" fill="#8c8c8c"/><rect x="623" y="13" width="1" height="3" fill="#8c8c8c"/><rect x="626" y="13" width="1" height="3" fill="#8c8c8c"/><rect x="630" y="13" width="1" height="3" fill="#8c8c8c"/><rect x="633" y="1" width="1" height="15" fill="#9a9a9a"/><text x="635" y="10" font-size="10" fill="#c4c4c4" font-family="Liberation Sans">90</text><rect x="637" y="13" width="1" height="3" fill="#8c8c8c"/><rect x="641" y="13" width="1" height="3" fill="#8c8c8c"/><rect x="644" y="13" width="1" height="3" fill="#8c8c8c"/><rect x="648" y="13" width="1" height="3" fill="#8c8c8c"/><rect x="652" y="12" width="1" height="4" fill="#a0a0a0"/><rect x="655" y="13" width="1" height="3" fill="#8c8c8c"/><rect x="659" y="13" width="1" height="3" fill="#8c8c8c"/><rect x="662" y="13" width="1" height="3" fill="#8c8c8c"/><rect x="666" y="13" width="1" height="3" fill="#8c8c8c"/><rect x="670" y="1" width="1" height="15" fill="#9a9a9a"/><text x="672" y="10" font-size="10" fill="#c4c4c4" font-family="Liberation Sans">100</text><rect x="673" y="13" width="1" height="3" fill="#8c8c8c"/><rect x="677" y="13" width="1" height="3" fill="#8c8c8c"/><rect x="681" y="13" width="1" height="3" fill="#8c8c8c"/><rect x="684" y="13" width="1" height="3" fill="#8c8c8c"/><rect x="688" y="12" width="1" height="4" fill="#a0a0a0"/><rect x="691" y="13" width="1" height="3" fill="#8c8c8c"/><rect x="695" y="13" width="1" height="3" fill="#8c8c8c"/><rect x="699" y="13" width="1" height="3" fill="#8c8c8c"/><rect x="702" y="13" width="1" height="3" fill="#8c8c8c"/><rect x="706" y="1" width="1" height="15" fill="#9a9a9a"/><text x="708" y="10" font-size="10" fill="#c4c4c4" font-family="Liberation Sans">110</text><rect x="710" y="13" width="1" height="3" fill="#8c8c8c"/><rect x="713" y="13" width="1" height="3" fill="#8c8c8c"/><rect x="717" y="13" width="1" height="3" fill="#8c8c8c"/><rect x="720" y="13" width="1" height="3" fill="#8c8c8c"/><rect x="724" y="12" width="1" height="4" fill="#a0a0a0"/><rect x="728" y="13" width="1" height="3" fill="#8c8c8c"/><rect x="731" y="13" width="1" height="3" fill="#8c8c8c"/><rect x="735" y="13" width="1" height="3" fill="#8c8c8c"/><rect x="739" y="13" width="1" height="3" fill="#8c8c8c"/><rect x="742" y="1" width="1" height="15" fill="#9a9a9a"/><text x="744" y="10" font-size="10" fill="#c4c4c4" font-family="Liberation Sans">120</text><rect x="746" y="13" width="1" height="3" fill="#8c8c8c"/><rect x="749" y="13" width="1" height="3" fill="#8c8c8c"/><rect x="753" y="13" width="1" height="3" fill="#8c8c8c"/><rect x="757" y="13" width="1" height="3" fill="#8c8c8c"/><rect x="760" y="12" width="1" height="4" fill="#a0a0a0"/><rect x="764" y="13" width="1" height="3" fill="#8c8c8c"/><rect x="768" y="13" width="1" height="3" fill="#8c8c8c"/><rect x="771" y="13" width="1" height="3" fill="#8c8c8c"/><rect x="775" y="13" width="1" height="3" fill="#8c8c8c"/><rect x="778" y="1" width="1" height="15" fill="#9a9a9a"/><text x="780" y="10" font-size="10" fill="#c4c4c4" font-family="Liberation Sans">130</text><rect x="782" y="13" width="1" height="3" fill="#8c8c8c"/><rect x="786" y="13" width="1" height="3" fill="#8c8c8c"/><rect x="789" y="13" width="1" height="3" fill="#8c8c8c"/><rect x="793" y="13" width="1" height="3" fill="#8c8c8c"/><rect x="796" y="12" width="1" height="4" fill="#a0a0a0"/><rect x="800" y="13" width="1" height="3" fill="#8c8c8c"/><rect x="804" y="13" width="1" height="3" fill="#8c8c8c"/><rect x="807" y="13" width="1" height="3" fill="#8c8c8c"/><rect x="811" y="13" width="1" height="3" fill="#8c8c8c"/><rect x="815" y="1" width="1" height="15" fill="#9a9a9a"/><text x="817" y="10" font-size="10" fill="#c4c4c4" font-family="Liberation Sans">140</text><rect x="818" y="13" width="1" height="3" fill="#8c8c8c"/><rect x="822" y="13" width="1" height="3" fill="#8c8c8c"/><rect x="825" y="13" width="1" height="3" fill="#8c8c8c"/><rect x="829" y="13" width="1" height="3" fill="#8c8c8c"/><rect x="833" y="12" width="1" height="4" fill="#a0a0a0"/><rect x="836" y="13" width="1" height="3" fill="#8c8c8c"/><rect x="840" y="13" width="1" height="3" fill="#8c8c8c"/><rect x="844" y="13" width="1" height="3" fill="#8c8c8c"/><rect x="847" y="13" width="1" height="3" fill="#8c8c8c"/><rect x="851" y="1" width="1" height="15" fill="#9a9a9a"/><text x="853" y="10" font-size="10" fill="#c4c4c4" font-family="Liberation Sans">150</text><rect x="854" y="13" width="1" height="3" fill="#8c8c8c"/><rect x="858" y="13" width="1" height="3" fill="#8c8c8c"/><rect x="862" y="13" width="1" height="3" fill="#8c8c8c"/><rect x="865" y="13" width="1" height="3" fill="#8c8c8c"/><rect x="869" y="12" width="1" height="4" fill="#a0a0a0"/><rect x="873" y="13" width="1" height="3" fill="#8c8c8c"/><rect x="876" y="13" width="1" height="3" fill="#8c8c8c"/><rect x="880" y="13" width="1" height="3" fill="#8c8c8c"/><rect x="883" y="13" width="1" height="3" fill="#8c8c8c"/><rect x="887" y="1" width="1" height="15" fill="#9a9a9a"/><text x="889" y="10" font-size="10" fill="#c4c4c4" font-family="Liberation Sans">160</text><rect x="891" y="13" width="1" height="3" fill="#8c8c8c"/><rect x="894" y="13" width="1" height="3" fill="#8c8c8c"/><rect x="898" y="13" width="1" height="3" fill="#8c8c8c"/><rect x="902" y="13" width="1" height="3" fill="#8c8c8c"/><rect x="905" y="12" width="1" height="4" fill="#a0a0a0"/><rect x="909" y="13" width="1" height="3" fill="#8c8c8c"/><rect x="912" y="13" width="1" height="3" fill="#8c8c8c"/><rect x="916" y="13" width="1" height="3" fill="#8c8c8c"/><rect x="920" y="13" width="1" height="3" fill="#8c8c8c"/><rect x="923" y="1" width="1" height="15" fill="#9a9a9a"/><text x="925" y="10" font-size="10" fill="#c4c4c4" font-family="Liberation Sans">170</text><rect x="927" y="13" width="1" height="3" fill="#8c8c8c"/><rect x="931" y="13" width="1" height="3" fill="#8c8c8c"/><rect x="934" y="13" width="1" height="3" fill="#8c8c8c"/><rect x="938" y="13" width="1" height="3" fill="#8c8c8c"/><rect x="941" y="12" width="1" height="4" fill="#a0a0a0"/><rect x="945" y="13" width="1" height="3" fill="#8c8c8c"/><rect x="949" y="13" width="1" height="3" fill="#8c8c8c"/><rect x="952" y="13" width="1" height="3" fill="#8c8c8c"/><rect x="956" y="13" width="1" height="3" fill="#8c8c8c"/><rect x="959" y="1" width="1" height="15" fill="#9a9a9a"/><text x="961" y="10" font-size="10" fill="#c4c4c4" font-family="Liberation Sans">180</text><rect x="963" y="13" width="1" height="3" fill="#8c8c8c"/><rect x="967" y="13" width="1" height="3" fill="#8c8c8c"/><rect x="970" y="13" width="1" height="3" fill="#8c8c8c"/><rect x="974" y="13" width="1" height="3" fill="#8c8c8c"/><rect x="978" y="12" width="1" height="4" fill="#a0a0a0"/><rect x="981" y="13" width="1" height="3" fill="#8c8c8c"/><rect x="985" y="13" width="1" height="3" fill="#8c8c8c"/><rect x="988" y="13" width="1" height="3" fill="#8c8c8c"/><rect x="992" y="13" width="1" height="3" fill="#8c8c8c"/><rect x="996" y="1" width="1" height="15" fill="#9a9a9a"/><text x="998" y="10" font-size="10" fill="#c4c4c4" font-family="Liberation Sans">190</text><rect x="999" y="13" width="1" height="3" fill="#8c8c8c"/><rect x="1003" y="13" width="1" height="3" fill="#8c8c8c"/><rect x="1007" y="13" width="1" height="3" fill="#8c8c8c"/><rect x="1010" y="13" width="1" height="3" fill="#8c8c8c"/><rect x="1014" y="12" width="1" height="4" fill="#a0a0a0"/><rect x="1017" y="13" width="1" height="3" fill="#8c8c8c"/><rect x="1021" y="13" width="1" height="3" fill="#8c8c8c"/><rect x="1025" y="13" width="1" height="3" fill="#8c8c8c"/><rect x="1028" y="13" width="1" height="3" fill="#8c8c8c"/><rect x="1032" y="1" width="1" height="15" fill="#9a9a9a"/><text x="1034" y="10" font-size="10" fill="#c4c4c4" font-family="Liberation Sans">200</text><rect x="1036" y="13" width="1" height="3" fill="#8c8c8c"/><rect x="1039" y="13" width="1" height="3" fill="#8c8c8c"/><rect x="1043" y="13" width="1" height="3" fill="#8c8c8c"/><rect x="1046" y="13" width="1" height="3" fill="#8c8c8c"/><rect x="1050" y="12" width="1" height="4" fill="#a0a0a0"/><rect x="1054" y="13" width="1" height="3" fill="#8c8c8c"/><rect x="1057" y="13" width="1" height="3" fill="#8c8c8c"/><rect x="1061" y="13" width="1" height="3" fill="#8c8c8c"/><rect x="1065" y="13" width="1" height="3" fill="#8c8c8c"/><rect x="1068" y="1" width="1" height="15" fill="#9a9a9a"/><text x="1070" y="10" font-size="10" fill="#c4c4c4" font-family="Liberation Sans">210</text><rect x="1072" y="13" width="1" height="3" fill="#8c8c8c"/><rect x="1075" y="13" width="1" height="3" fill="#8c8c8c"/><rect x="1079" y="13" width="1" height="3" fill="#8c8c8c"/><rect x="1083" y="13" width="1" height="3" fill="#8c8c8c"/><rect x="1086" y="12" width="1" height="4" fill="#a0a0a0"/><rect x="1090" y="13" width="1" height="3" fill="#8c8c8c"/><rect x="1093" y="13" width="1" height="3" fill="#8c8c8c"/><rect x="1097" y="13" width="1" height="3" fill="#8c8c8c"/><rect x="1101" y="13" width="1" height="3" fill="#8c8c8c"/><rect x="1104" y="1" width="1" height="15" fill="#9a9a9a"/><text x="1106" y="10" font-size="10" fill="#c4c4c4" font-family="Liberation Sans">220</text><rect x="1108" y="13" width="1" height="3" fill="#8c8c8c"/><rect x="1112" y="13" width="1" height="3" fill="#8c8c8c"/><rect x="1115" y="13" width="1" height="3" fill="#8c8c8c"/><rect x="1119" y="13" width="1" height="3" fill="#8c8c8c"/><rect x="1122" y="12" width="1" height="4" fill="#a0a0a0"/><rect x="1126" y="13" width="1" height="3" fill="#8c8c8c"/><rect x="1130" y="13" width="1" height="3" fill="#8c8c8c"/><rect x="1133" y="13" width="1" height="3" fill="#8c8c8c"/><rect x="1137" y="13" width="1" height="3" fill="#8c8c8c"/><rect x="1141" y="1" width="1" height="15" fill="#9a9a9a"/><text x="1143" y="10" font-size="10" fill="#c4c4c4" font-family="Liberation Sans">230</text><rect x="1144" y="13" width="1" height="3" fill="#8c8c8c"/><rect x="1148" y="13" width="1" height="3" fill="#8c8c8c"/><rect x="1151" y="13" width="1" height="3" fill="#8c8c8c"/><rect x="1155" y="13" width="1" height="3" fill="#8c8c8c"/><rect x="1159" y="12" width="1" height="4" fill="#a0a0a0"/><rect x="1162" y="13" width="1" height="3" fill="#8c8c8c"/><rect x="1166" y="13" width="1" height="3" fill="#8c8c8c"/><rect x="1170" y="13" width="1" height="3" fill="#8c8c8c"/><rect x="1173" y="13" width="1" height="3" fill="#8c8c8c"/><rect x="1177" y="1" width="1" height="15" fill="#9a9a9a"/><text x="1179" y="10" font-size="10" fill="#c4c4c4" font-family="Liberation Sans">240</text><rect x="1180" y="13" width="1" height="3" fill="#8c8c8c"/><rect x="1184" y="13" width="1" height="3" fill="#8c8c8c"/><rect x="1188" y="13" width="1" height="3" fill="#8c8c8c"/><rect x="1191" y="13" width="1" height="3" fill="#8c8c8c"/><rect x="1195" y="12" width="1" height="4" fill="#a0a0a0"/><rect x="1199" y="13" width="1" height="3" fill="#8c8c8c"/><rect x="1202" y="13" width="1" height="3" fill="#8c8c8c"/><rect x="1206" y="13" width="1" height="3" fill="#8c8c8c"/><rect x="1209" y="13" width="1" height="3" fill="#8c8c8c"/><rect x="1213" y="1" width="1" height="15" fill="#9a9a9a"/><text x="1215" y="10" font-size="10" fill="#c4c4c4" font-family="Liberation Sans">250</text><rect x="1217" y="13" width="1" height="3" fill="#8c8c8c"/><rect x="1220" y="13" width="1" height="3" fill="#8c8c8c"/><rect x="1224" y="13" width="1" height="3" fill="#8c8c8c"/><rect x="1228" y="13" width="1" height="3" fill="#8c8c8c"/><rect x="1231" y="12" width="1" height="4" fill="#a0a0a0"/><rect x="1235" y="13" width="1" height="3" fill="#8c8c8c"/><rect x="1238" y="13" width="1" height="3" fill="#8c8c8c"/><rect x="1242" y="13" width="1" height="3" fill="#8c8c8c"/><rect x="1246" y="13" width="1" height="3" fill="#8c8c8c"/><rect x="1249" y="1" width="1" height="15" fill="#9a9a9a"/><text x="1251" y="10" font-size="10" fill="#c4c4c4" font-family="Liberation Sans">260</text><rect x="1253" y="13" width="1" height="3" fill="#8c8c8c"/><rect x="1256" y="13" width="1" height="3" fill="#8c8c8c"/><rect x="1260" y="13" width="1" height="3" fill="#8c8c8c"/><rect x="1264" y="13" width="1" height="3" fill="#8c8c8c"/><rect x="1267" y="12" width="1" height="4" fill="#a0a0a0"/><rect x="1271" y="13" width="1" height="3" fill="#8c8c8c"/><rect x="1275" y="13" width="1" height="3" fill="#8c8c8c"/><rect x="1278" y="13" width="1" height="3" fill="#8c8c8c"/><rect x="1282" y="13" width="1" height="3" fill="#8c8c8c"/><rect x="1285" y="1" width="1" height="15" fill="#9a9a9a"/><text x="1287" y="10" font-size="10" fill="#c4c4c4" font-family="Liberation Sans">270</text><rect x="1289" y="13" width="1" height="3" fill="#8c8c8c"/><rect x="1293" y="13" width="1" height="3" fill="#8c8c8c"/><rect x="1296" y="13" width="1" height="3" fill="#8c8c8c"/><rect x="1300" y="13" width="1" height="3" fill="#8c8c8c"/><rect x="1304" y="12" width="1" height="4" fill="#a0a0a0"/><rect x="1307" y="13" width="1" height="3" fill="#8c8c8c"/><rect x="1311" y="13" width="1" height="3" fill="#8c8c8c"/><rect x="1314" y="13" width="1" height="3" fill="#8c8c8c"/><rect x="1318" y="13" width="1" height="3" fill="#8c8c8c"/><rect x="1322" y="1" width="1" height="15" fill="#9a9a9a"/><text x="1324" y="10" font-size="10" fill="#c4c4c4" font-family="Liberation Sans">280</text><rect x="1325" y="13" width="1" height="3" fill="#8c8c8c"/><rect x="1329" y="13" width="1" height="3" fill="#8c8c8c"/><rect x="1333" y="13" width="1" height="3" fill="#8c8c8c"/><rect x="1336" y="13" width="1" height="3" fill="#8c8c8c"/><rect x="1340" y="12" width="1" height="4" fill="#a0a0a0"/><rect x="1343" y="13" width="1" height="3" fill="#8c8c8c"/><rect x="1347" y="13" width="1" height="3" fill="#8c8c8c"/><rect x="1351" y="13" width="1" height="3" fill="#8c8c8c"/><rect x="1354" y="13" width="1" height="3" fill="#8c8c8c"/><rect x="1358" y="1" width="1" height="15" fill="#9a9a9a"/><text x="1360" y="10" font-size="10" fill="#c4c4c4" font-family="Liberation Sans">290</text><rect x="1362" y="13" width="1" height="3" fill="#8c8c8c"/><rect x="1365" y="13" width="1" height="3" fill="#8c8c8c"/><rect x="1369" y="13" width="1" height="3" fill="#8c8c8c"/><rect x="1372" y="13" width="1" height="3" fill="#8c8c8c"/><rect x="1376" y="12" width="1" height="4" fill="#a0a0a0"/><rect x="1380" y="13" width="1" height="3" fill="#8c8c8c"/><rect x="1383" y="13" width="1" height="3" fill="#8c8c8c"/><rect x="1387" y="13" width="1" height="3" fill="#8c8c8c"/><rect x="1391" y="13" width="1" height="3" fill="#8c8c8c"/><rect x="1394" y="1" width="1" height="15" fill="#9a9a9a"/><text x="1396" y="10" font-size="10" fill="#c4c4c4" font-family="Liberation Sans">300</text><rect x="1398" y="13" width="1" height="3" fill="#8c8c8c"/><rect x="1401" y="13" width="1" height="3" fill="#8c8c8c"/><rect x="1405" y="13" width="1" height="3" fill="#8c8c8c"/><rect x="1409" y="13" width="1" height="3" fill="#8c8c8c"/><rect x="1412" y="12" width="1" height="4" fill="#a0a0a0"/><rect x="1416" y="13" width="1" height="3" fill="#8c8c8c"/><rect x="1419" y="13" width="1" height="3" fill="#8c8c8c"/><rect x="1423" y="13" width="1" height="3" fill="#8c8c8c"/><rect x="1427" y="13" width="1" height="3" fill="#8c8c8c"/><rect x="1430" y="1" width="1" height="15" fill="#9a9a9a"/><text x="1432" y="10" font-size="10" fill="#c4c4c4" font-family="Liberation Sans">310</text><rect x="1434" y="13" width="1" height="3" fill="#8c8c8c"/><rect x="1438" y="13" width="1" height="3" fill="#8c8c8c"/><rect x="1441" y="13" width="1" height="3" fill="#8c8c8c"/><rect x="1445" y="13" width="1" height="3" fill="#8c8c8c"/><rect x="1448" y="12" width="1" height="4" fill="#a0a0a0"/><rect x="1452" y="13" width="1" height="3" fill="#8c8c8c"/><rect x="1456" y="13" width="1" height="3" fill="#8c8c8c"/><rect x="1459" y="13" width="1" height="3" fill="#8c8c8c"/><rect x="1463" y="13" width="1" height="3" fill="#8c8c8c"/><rect x="1467" y="1" width="1" height="15" fill="#9a9a9a"/><text x="1469" y="10" font-size="10" fill="#c4c4c4" font-family="Liberation Sans">320</text><rect x="1470" y="13" width="1" height="3" fill="#8c8c8c"/><rect x="1474" y="13" width="1" height="3" fill="#8c8c8c"/><rect x="1477" y="13" width="1" height="3" fill="#8c8c8c"/><rect x="1481" y="13" width="1" height="3" fill="#8c8c8c"/><rect x="1485" y="12" width="1" height="4" fill="#a0a0a0"/><rect x="1488" y="13" width="1" height="3" fill="#8c8c8c"/><rect x="0" y="0" width="17" height="17" fill="#1f1f1f"/><path d="M1 6h15 M6 1v15" stroke="#c8c8c8" stroke-width="1" stroke-dasharray="1 1"/><rect x="16" y="0" width="1" height="17" fill="#888"/></svg>
<div class="a" style="left:58px;top:117px;width:1680px;height:14px;background:#414141"></div>
<div class="a" style="left:58px;top:131px;width:1680px;height:1px;background:#101010"></div>
<svg style="left:57px;top:131px;" width="18" height="829" viewBox="0 0 18 829"><rect x="0" y="0" width="18" height="829" fill="#1f1f1f"/><rect x="17" y="0" width="1" height="829" fill="#3a3a3a"/><text x="6.5" y="9.0" font-size="9" text-anchor="middle" fill="#b4b4b4" font-family="Liberation Sans">0</text><rect x="15" y="2" width="2" height="1" fill="#8a8a8a"/><rect x="15" y="5" width="2" height="1" fill="#8a8a8a"/><rect x="13" y="9" width="4" height="1" fill="#8a8a8a"/><rect x="15" y="13" width="2" height="1" fill="#8a8a8a"/><rect x="15" y="16" width="2" height="1" fill="#8a8a8a"/><rect x="15" y="20" width="2" height="1" fill="#8a8a8a"/><rect x="15" y="23" width="2" height="1" fill="#8a8a8a"/><rect x="2" y="27" width="15" height="1" fill="#808080"/><text x="6.5" y="36.5" font-size="9" text-anchor="middle" fill="#b4b4b4" font-family="Liberation Sans">2</text><text x="6.5" y="45.0" font-size="9" text-anchor="middle" fill="#b4b4b4" font-family="Liberation Sans">0</text><rect x="15" y="31" width="2" height="1" fill="#8a8a8a"/><rect x="15" y="34" width="2" height="1" fill="#8a8a8a"/><rect x="15" y="38" width="2" height="1" fill="#8a8a8a"/><rect x="15" y="42" width="2" height="1" fill="#8a8a8a"/><rect x="13" y="45" width="4" height="1" fill="#8a8a8a"/><rect x="15" y="49" width="2" height="1" fill="#8a8a8a"/><rect x="15" y="52" width="2" height="1" fill="#8a8a8a"/><rect x="15" y="56" width="2" height="1" fill="#8a8a8a"/><rect x="15" y="60" width="2" height="1" fill="#8a8a8a"/><rect x="2" y="63" width="15" height="1" fill="#808080"/><text x="6.5" y="72.5" font-size="9" text-anchor="middle" fill="#b4b4b4" font-family="Liberation Sans">1</text><text x="6.5" y="81.0" font-size="9" text-anchor="middle" fill="#b4b4b4" font-family="Liberation Sans">0</text><rect x="15" y="67" width="2" height="1" fill="#8a8a8a"/><rect x="15" y="71" width="2" height="1" fill="#8a8a8a"/><rect x="15" y="74" width="2" height="1" fill="#8a8a8a"/><rect x="15" y="78" width="2" height="1" fill="#8a8a8a"/><rect x="13" y="81" width="4" height="1" fill="#8a8a8a"/><rect x="15" y="85" width="2" height="1" fill="#8a8a8a"/><rect x="15" y="89" width="2" height="1" fill="#8a8a8a"/><rect x="15" y="92" width="2" height="1" fill="#8a8a8a"/><rect x="15" y="96" width="2" height="1" fill="#8a8a8a"/><rect x="2" y="99" width="15" height="1" fill="#808080"/><text x="6.5" y="108.5" font-size="9" text-anchor="middle" fill="#b4b4b4" font-family="Liberation Sans">0</text><rect x="15" y="103" width="2" height="1" fill="#8a8a8a"/><rect x="15" y="107" width="2" height="1" fill="#8a8a8a"/><rect x="15" y="110" width="2" height="1" fill="#8a8a8a"/><rect x="15" y="114" width="2" height="1" fill="#8a8a8a"/><rect x="13" y="118" width="4" height="1" fill="#8a8a8a"/><rect x="15" y="121" width="2" height="1" fill="#8a8a8a"/><rect x="15" y="125" width="2" height="1" fill="#8a8a8a"/><rect x="15" y="128" width="2" height="1" fill="#8a8a8a"/><rect x="15" y="132" width="2" height="1" fill="#8a8a8a"/><rect x="2" y="136" width="15" height="1" fill="#808080"/><text x="6.5" y="145.5" font-size="9" text-anchor="middle" fill="#b4b4b4" font-family="Liberation Sans">1</text><text x="6.5" y="154.0" font-size="9" text-anchor="middle" fill="#b4b4b4" font-family="Liberation Sans">0</text><rect x="15" y="139" width="2" height="1" fill="#8a8a8a"/><rect x="15" y="143" width="2" height="1" fill="#8a8a8a"/><rect x="15" y="147" width="2" height="1" fill="#8a8a8a"/><rect x="15" y="150" width="2" height="1" fill="#8a8a8a"/><rect x="13" y="154" width="4" height="1" fill="#8a8a8a"/><rect x="15" y="157" width="2" height="1" fill="#8a8a8a"/><rect x="15" y="161" width="2" height="1" fill="#8a8a8a"/><rect x="15" y="165" width="2" height="1" fill="#8a8a8a"/><rect x="15" y="168" width="2" height="1" fill="#8a8a8a"/><rect x="2" y="172" width="15" height="1" fill="#808080"/><text x="6.5" y="181.5" font-size="9" text-anchor="middle" fill="#b4b4b4" font-family="Liberation Sans">2</text><text x="6.5" y="190.0" font-size="9" text-anchor="middle" fill="#b4b4b4" font-family="Liberation Sans">0</text><rect x="15" y="176" width="2" height="1" fill="#8a8a8a"/><rect x="15" y="179" width="2" height="1" fill="#8a8a8a"/><rect x="15" y="183" width="2" height="1" fill="#8a8a8a"/><rect x="15" y="186" width="2" height="1" fill="#8a8a8a"/><rect x="13" y="190" width="4" height="1" fill="#8a8a8a"/><rect x="15" y="194" width="2" height="1" fill="#8a8a8a"/><rect x="15" y="197" width="2" height="1" fill="#8a8a8a"/><rect x="15" y="201" width="2" height="1" fill="#8a8a8a"/><rect x="15" y="205" width="2" height="1" fill="#8a8a8a"/><rect x="2" y="208" width="15" height="1" fill="#808080"/><text x="6.5" y="217.5" font-size="9" text-anchor="middle" fill="#b4b4b4" font-family="Liberation Sans">3</text><text x="6.5" y="226.0" font-size="9" text-anchor="middle" fill="#b4b4b4" font-family="Liberation Sans">0</text><rect x="15" y="212" width="2" height="1" fill="#8a8a8a"/><rect x="15" y="215" width="2" height="1" fill="#8a8a8a"/><rect x="15" y="219" width="2" height="1" fill="#8a8a8a"/><rect x="15" y="223" width="2" height="1" fill="#8a8a8a"/><rect x="13" y="226" width="4" height="1" fill="#8a8a8a"/><rect x="15" y="230" width="2" height="1" fill="#8a8a8a"/><rect x="15" y="234" width="2" height="1" fill="#8a8a8a"/><rect x="15" y="237" width="2" height="1" fill="#8a8a8a"/><rect x="15" y="241" width="2" height="1" fill="#8a8a8a"/><rect x="2" y="244" width="15" height="1" fill="#808080"/><text x="6.5" y="253.5" font-size="9" text-anchor="middle" fill="#b4b4b4" font-family="Liberation Sans">4</text><text x="6.5" y="262.0" font-size="9" text-anchor="middle" fill="#b4b4b4" font-family="Liberation Sans">0</text><rect x="15" y="248" width="2" height="1" fill="#8a8a8a"/><rect x="15" y="252" width="2" height="1" fill="#8a8a8a"/><rect x="15" y="255" width="2" height="1" fill="#8a8a8a"/><rect x="15" y="259" width="2" height="1" fill="#8a8a8a"/><rect x="13" y="262" width="4" height="1" fill="#8a8a8a"/><rect x="15" y="266" width="2" height="1" fill="#8a8a8a"/><rect x="15" y="270" width="2" height="1" fill="#8a8a8a"/><rect x="15" y="273" width="2" height="1" fill="#8a8a8a"/><rect x="15" y="277" width="2" height="1" fill="#8a8a8a"/><rect x="2" y="281" width="15" height="1" fill="#808080"/><text x="6.5" y="290.5" font-size="9" text-anchor="middle" fill="#b4b4b4" font-family="Liberation Sans">5</text><text x="6.5" y="299.0" font-size="9" text-anchor="middle" fill="#b4b4b4" font-family="Liberation Sans">0</text><rect x="15" y="284" width="2" height="1" fill="#8a8a8a"/><rect x="15" y="288" width="2" height="1" fill="#8a8a8a"/><rect x="15" y="291" width="2" height="1" fill="#8a8a8a"/><rect x="15" y="295" width="2" height="1" fill="#8a8a8a"/><rect x="13" y="299" width="4" height="1" fill="#8a8a8a"/><rect x="15" y="302" width="2" height="1" fill="#8a8a8a"/><rect x="15" y="306" width="2" height="1" fill="#8a8a8a"/><rect x="15" y="310" width="2" height="1" fill="#8a8a8a"/><rect x="15" y="313" width="2" height="1" fill="#8a8a8a"/><rect x="2" y="317" width="15" height="1" fill="#808080"/><text x="6.5" y="326.5" font-size="9" text-anchor="middle" fill="#b4b4b4" font-family="Liberation Sans">6</text><text x="6.5" y="335.0" font-size="9" text-anchor="middle" fill="#b4b4b4" font-family="Liberation Sans">0</text><rect x="15" y="320" width="2" height="1" fill="#8a8a8a"/><rect x="15" y="324" width="2" height="1" fill="#8a8a8a"/><rect x="15" y="328" width="2" height="1" fill="#8a8a8a"/><rect x="15" y="331" width="2" height="1" fill="#8a8a8a"/><rect x="13" y="335" width="4" height="1" fill="#8a8a8a"/><rect x="15" y="339" width="2" height="1" fill="#8a8a8a"/><rect x="15" y="342" width="2" height="1" fill="#8a8a8a"/><rect x="15" y="346" width="2" height="1" fill="#8a8a8a"/><rect x="15" y="349" width="2" height="1" fill="#8a8a8a"/><rect x="2" y="353" width="15" height="1" fill="#808080"/><text x="6.5" y="362.5" font-size="9" text-anchor="middle" fill="#b4b4b4" font-family="Liberation Sans">7</text><text x="6.5" y="371.0" font-size="9" text-anchor="middle" fill="#b4b4b4" font-family="Liberation Sans">0</text><rect x="15" y="357" width="2" height="1" fill="#8a8a8a"/><rect x="15" y="360" width="2" height="1" fill="#8a8a8a"/><rect x="15" y="364" width="2" height="1" fill="#8a8a8a"/><rect x="15" y="368" width="2" height="1" fill="#8a8a8a"/><rect x="13" y="371" width="4" height="1" fill="#8a8a8a"/><rect x="15" y="375" width="2" height="1" fill="#8a8a8a"/><rect x="15" y="378" width="2" height="1" fill="#8a8a8a"/><rect x="15" y="382" width="2" height="1" fill="#8a8a8a"/><rect x="15" y="386" width="2" height="1" fill="#8a8a8a"/><rect x="2" y="389" width="15" height="1" fill="#808080"/><text x="6.5" y="398.5" font-size="9" text-anchor="middle" fill="#b4b4b4" font-family="Liberation Sans">8</text><text x="6.5" y="407.0" font-size="9" text-anchor="middle" fill="#b4b4b4" font-family="Liberation Sans">0</text><rect x="15" y="393" width="2" height="1" fill="#8a8a8a"/><rect x="15" y="397" width="2" height="1" fill="#8a8a8a"/><rect x="15" y="400" width="2" height="1" fill="#8a8a8a"/><rect x="15" y="404" width="2" height="1" fill="#8a8a8a"/><rect x="13" y="407" width="4" height="1" fill="#8a8a8a"/><rect x="15" y="411" width="2" height="1" fill="#8a8a8a"/><rect x="15" y="415" width="2" height="1" fill="#8a8a8a"/><rect x="15" y="418" width="2" height="1" fill="#8a8a8a"/><rect x="15" y="422" width="2" height="1" fill="#8a8a8a"/><rect x="2" y="425" width="15" height="1" fill="#808080"/><text x="6.5" y="434.5" font-size="9" text-anchor="middle" fill="#b4b4b4" font-family="Liberation Sans">9</text><text x="6.5" y="443.0" font-size="9" text-anchor="middle" fill="#b4b4b4" font-family="Liberation Sans">0</text><rect x="15" y="429" width="2" height="1" fill="#8a8a8a"/><rect x="15" y="433" width="2" height="1" fill="#8a8a8a"/><rect x="15" y="436" width="2" height="1" fill="#8a8a8a"/><rect x="15" y="440" width="2" height="1" fill="#8a8a8a"/><rect x="13" y="444" width="4" height="1" fill="#8a8a8a"/><rect x="15" y="447" width="2" height="1" fill="#8a8a8a"/><rect x="15" y="451" width="2" height="1" fill="#8a8a8a"/><rect x="15" y="454" width="2" height="1" fill="#8a8a8a"/><rect x="15" y="458" width="2" height="1" fill="#8a8a8a"/><rect x="2" y="462" width="15" height="1" fill="#808080"/><text x="6.5" y="471.5" font-size="9" text-anchor="middle" fill="#b4b4b4" font-family="Liberation Sans">1</text><text x="6.5" y="480.0" font-size="9" text-anchor="middle" fill="#b4b4b4" font-family="Liberation Sans">0</text><text x="6.5" y="488.5" font-size="9" text-anchor="middle" fill="#b4b4b4" font-family="Liberation Sans">0</text><rect x="15" y="465" width="2" height="1" fill="#8a8a8a"/><rect x="15" y="469" width="2" height="1" fill="#8a8a8a"/><rect x="15" y="473" width="2" height="1" fill="#8a8a8a"/><rect x="15" y="476" width="2" height="1" fill="#8a8a8a"/><rect x="13" y="480" width="4" height="1" fill="#8a8a8a"/><rect x="15" y="483" width="2" height="1" fill="#8a8a8a"/><rect x="15" y="487" width="2" height="1" fill="#8a8a8a"/><rect x="15" y="491" width="2" height="1" fill="#8a8a8a"/><rect x="15" y="494" width="2" height="1" fill="#8a8a8a"/><rect x="2" y="498" width="15" height="1" fill="#808080"/><text x="6.5" y="507.5" font-size="9" text-anchor="middle" fill="#b4b4b4" font-family="Liberation Sans">1</text><text x="6.5" y="516.0" font-size="9" text-anchor="middle" fill="#b4b4b4" font-family="Liberation Sans">1</text><text x="6.5" y="524.5" font-size="9" text-anchor="middle" fill="#b4b4b4" font-family="Liberation Sans">0</text><rect x="15" y="502" width="2" height="1" fill="#8a8a8a"/><rect x="15" y="505" width="2" height="1" fill="#8a8a8a"/><rect x="15" y="509" width="2" height="1" fill="#8a8a8a"/><rect x="15" y="512" width="2" height="1" fill="#8a8a8a"/><rect x="13" y="516" width="4" height="1" fill="#8a8a8a"/><rect x="15" y="520" width="2" height="1" fill="#8a8a8a"/><rect x="15" y="523" width="2" height="1" fill="#8a8a8a"/><rect x="15" y="527" width="2" height="1" fill="#8a8a8a"/><rect x="15" y="531" width="2" height="1" fill="#8a8a8a"/><rect x="2" y="534" width="15" height="1" fill="#808080"/><text x="6.5" y="543.5" font-size="9" text-anchor="middle" fill="#b4b4b4" font-family="Liberation Sans">1</text><text x="6.5" y="552.0" font-size="9" text-anchor="middle" fill="#b4b4b4" font-family="Liberation Sans">2</text><text x="6.5" y="560.5" font-size="9" text-anchor="middle" fill="#b4b4b4" font-family="Liberation Sans">0</text><rect x="15" y="538" width="2" height="1" fill="#8a8a8a"/><rect x="15" y="541" width="2" height="1" fill="#8a8a8a"/><rect x="15" y="545" width="2" height="1" fill="#8a8a8a"/><rect x="15" y="549" width="2" height="1" fill="#8a8a8a"/><rect x="13" y="552" width="4" height="1" fill="#8a8a8a"/><rect x="15" y="556" width="2" height="1" fill="#8a8a8a"/><rect x="15" y="560" width="2" height="1" fill="#8a8a8a"/><rect x="15" y="563" width="2" height="1" fill="#8a8a8a"/><rect x="15" y="567" width="2" height="1" fill="#8a8a8a"/><rect x="2" y="570" width="15" height="1" fill="#808080"/><text x="6.5" y="579.5" font-size="9" text-anchor="middle" fill="#b4b4b4" font-family="Liberation Sans">1</text><text x="6.5" y="588.0" font-size="9" text-anchor="middle" fill="#b4b4b4" font-family="Liberation Sans">3</text><text x="6.5" y="596.5" font-size="9" text-anchor="middle" fill="#b4b4b4" font-family="Liberation Sans">0</text><rect x="15" y="574" width="2" height="1" fill="#8a8a8a"/><rect x="15" y="578" width="2" height="1" fill="#8a8a8a"/><rect x="15" y="581" width="2" height="1" fill="#8a8a8a"/><rect x="15" y="585" width="2" height="1" fill="#8a8a8a"/><rect x="13" y="588" width="4" height="1" fill="#8a8a8a"/><rect x="15" y="592" width="2" height="1" fill="#8a8a8a"/><rect x="15" y="596" width="2" height="1" fill="#8a8a8a"/><rect x="15" y="599" width="2" height="1" fill="#8a8a8a"/><rect x="15" y="603" width="2" height="1" fill="#8a8a8a"/><rect x="2" y="607" width="15" height="1" fill="#808080"/><text x="6.5" y="616.5" font-size="9" text-anchor="middle" fill="#b4b4b4" font-family="Liberation Sans">1</text><text x="6.5" y="625.0" font-size="9" text-anchor="middle" fill="#b4b4b4" font-family="Liberation Sans">4</text><text x="6.5" y="633.5" font-size="9" text-anchor="middle" fill="#b4b4b4" font-family="Liberation Sans">0</text><rect x="15" y="610" width="2" height="1" fill="#8a8a8a"/><rect x="15" y="614" width="2" height="1" fill="#8a8a8a"/><rect x="15" y="617" width="2" height="1" fill="#8a8a8a"/><rect x="15" y="621" width="2" height="1" fill="#8a8a8a"/><rect x="13" y="625" width="4" height="1" fill="#8a8a8a"/><rect x="15" y="628" width="2" height="1" fill="#8a8a8a"/><rect x="15" y="632" width="2" height="1" fill="#8a8a8a"/><rect x="15" y="636" width="2" height="1" fill="#8a8a8a"/><rect x="15" y="639" width="2" height="1" fill="#8a8a8a"/><rect x="2" y="643" width="15" height="1" fill="#808080"/><text x="6.5" y="652.5" font-size="9" text-anchor="middle" fill="#b4b4b4" font-family="Liberation Sans">1</text><text x="6.5" y="661.0" font-size="9" text-anchor="middle" fill="#b4b4b4" font-family="Liberation Sans">5</text><text x="6.5" y="669.5" font-size="9" text-anchor="middle" fill="#b4b4b4" font-family="Liberation Sans">0</text><rect x="15" y="646" width="2" height="1" fill="#8a8a8a"/><rect x="15" y="650" width="2" height="1" fill="#8a8a8a"/><rect x="15" y="654" width="2" height="1" fill="#8a8a8a"/><rect x="15" y="657" width="2" height="1" fill="#8a8a8a"/><rect x="13" y="661" width="4" height="1" fill="#8a8a8a"/><rect x="15" y="665" width="2" height="1" fill="#8a8a8a"/><rect x="15" y="668" width="2" height="1" fill="#8a8a8a"/><rect x="15" y="672" width="2" height="1" fill="#8a8a8a"/><rect x="15" y="675" width="2" height="1" fill="#8a8a8a"/><rect x="2" y="679" width="15" height="1" fill="#808080"/><text x="6.5" y="688.5" font-size="9" text-anchor="middle" fill="#b4b4b4" font-family="Liberation Sans">1</text><text x="6.5" y="697.0" font-size="9" text-anchor="middle" fill="#b4b4b4" font-family="Liberation Sans">6</text><text x="6.5" y="705.5" font-size="9" text-anchor="middle" fill="#b4b4b4" font-family="Liberation Sans">0</text><rect x="15" y="683" width="2" height="1" fill="#8a8a8a"/><rect x="15" y="686" width="2" height="1" fill="#8a8a8a"/><rect x="15" y="690" width="2" height="1" fill="#8a8a8a"/><rect x="15" y="694" width="2" height="1" fill="#8a8a8a"/><rect x="13" y="697" width="4" height="1" fill="#8a8a8a"/><rect x="15" y="701" width="2" height="1" fill="#8a8a8a"/><rect x="15" y="704" width="2" height="1" fill="#8a8a8a"/><rect x="15" y="708" width="2" height="1" fill="#8a8a8a"/><rect x="15" y="712" width="2" height="1" fill="#8a8a8a"/><rect x="2" y="715" width="15" height="1" fill="#808080"/><text x="6.5" y="724.5" font-size="9" text-anchor="middle" fill="#b4b4b4" font-family="Liberation Sans">1</text><text x="6.5" y="733.0" font-size="9" text-anchor="middle" fill="#b4b4b4" font-family="Liberation Sans">7</text><rect x="15" y="719" width="2" height="1" fill="#8a8a8a"/><rect x="15" y="723" width="2" height="1" fill="#8a8a8a"/><rect x="15" y="726" width="2" height="1" fill="#8a8a8a"/><rect x="15" y="730" width="2" height="1" fill="#8a8a8a"/><rect x="13" y="733" width="4" height="1" fill="#8a8a8a"/><rect x="0" y="735" width="18" height="47" fill="#555555"/><rect x="0" y="735" width="18" height="1" fill="#2a2a2a"/><rect x="2" y="782" width="15" height="1" fill="#a8a8a8"/><rect x="14" y="786" width="3" height="1" fill="#8f8f8f"/><rect x="14" y="790" width="3" height="1" fill="#8f8f8f"/><rect x="14" y="793" width="3" height="1" fill="#8f8f8f"/><rect x="12" y="797" width="5" height="1" fill="#9a9a9a"/><rect x="14" y="801" width="3" height="1" fill="#8f8f8f"/><rect x="14" y="805" width="3" height="1" fill="#8f8f8f"/><rect x="2" y="809" width="15" height="1" fill="#a8a8a8"/><rect x="14" y="814" width="3" height="1" fill="#8f8f8f"/><rect x="14" y="818" width="3" height="1" fill="#8f8f8f"/><rect x="14" y="822" width="3" height="1" fill="#8f8f8f"/><rect x="14" y="826" width="3" height="1" fill="#8f8f8f"/><text x="6.5" y="792" font-size="9.5" text-anchor="middle" fill="#cccccc" font-family="Liberation Sans">0</text><text x="6.5" y="819" font-size="9.5" text-anchor="middle" fill="#cccccc" font-family="Liberation Sans">2</text><text x="6.5" y="827.5" font-size="9.5" text-anchor="middle" fill="#cccccc" font-family="Liberation Sans">0</text></svg>
<div class="a" style="left:56px;top:80px;width:2px;height:898px;background:#1e1e1e"></div>
<div class="a" style="left:58px;top:117px;width:17px;height:14px;background:#474747"></div>
<svg style="left:58px;top:123px;" width="17" height="3" viewBox="0 0 17 3"><path d="M0 1.5h16" stroke="#000" stroke-width="3"/><path d="M1 1.5h15" stroke="#ddd" stroke-width="1" stroke-dasharray="1 1"/></svg>
<div class="a" style="left:74px;top:117px;width:1px;height:14px;background:#777"></div>
<div class="a" style="left:75px;top:866px;width:1663px;height:1px;background:#151515"></div>
<div class="a" style="left:75px;top:867px;width:1663px;height:46px;background:#414141"></div>
<div class="a" style="left:75px;top:913px;width:1663px;height:1px;background:#151515"></div>
<div class="a" style="left:57px;top:960px;width:1697px;height:15px;background:#3d3d3d"></div>
<div class="a" style="left:57px;top:960px;width:18px;height:15px;background:#4a4a4a"></div>
<svg style="left:76px;top:962px;" width="19" height="12" viewBox="0 0 19 12"><rect x="0.5" y="0.5" width="18" height="11" rx="2" fill="#a8a8a8" stroke="#777"/><circle cx="6" cy="6" r="2.8" fill="none" stroke="#222" stroke-width="2.2" stroke-dasharray="1.3 0.9"/><path d="M10 4h6 M14 2l2 2-2 2 M16 8h-6 M12 6l-2 2 2 2" stroke="#222" stroke-width="1.2" fill="none"/></svg>
<svg style="left:102px;top:962px;" width="15" height="12" viewBox="0 0 15 12"><path d="M0.5 3.5v8h10v-4" fill="none" stroke="#ddd"/><path d="M4 8c0-4 3-5 7-5 M9 0.5l3 2.5-3 2.5" stroke="#ddd" stroke-width="1.3" fill="none"/></svg>
<svg style="left:126px;top:963px;" width="8" height="10" viewBox="0 0 8 10"><rect x="0" y="0" width="1.3" height="10" fill="#888"/><path d="M7.5 0.5L2.5 5 7.5 9.5z" fill="#888"/></svg>
<svg style="left:141px;top:963px;" width="6" height="10" viewBox="0 0 6 10"><path d="M5.5 0.5L0.5 5 5.5 9.5z" fill="#888"/></svg>
<div class="t" style="left:155px;top:964px;font-size:9.5px;color:#ddd;font-weight:bold;">1</div>
<svg style="left:239px;top:965px;" width="8" height="6" viewBox="0 0 8 6"><path d="M0 0h8l-4 5z" fill="#ddd"/></svg>
<svg style="left:256px;top:963px;" width="6" height="10" viewBox="0 0 6 10"><path d="M0.5 0.5L5.5 5 0.5 9.5z" fill="#ddd"/></svg>
<svg style="left:270px;top:963px;" width="8" height="10" viewBox="0 0 8 10"><path d="M0.5 0.5L5.5 5 0.5 9.5z" fill="#ddd"/><rect x="6.5" y="0" width="1.3" height="10" fill="#ddd"/></svg>
<svg style="left:285px;top:962px;" width="18" height="13" viewBox="0 0 18 13"><circle cx="6" cy="6" r="5.5" fill="#ccc"/><path d="M3.5 3h3.5l2 2v4H3.5z" fill="#444"/><path d="M14 11h3l-1.5 1.5z" fill="#ddd"/></svg>
<div class="t" style="left:311px;top:964px;font-size:9.2px;color:#7c7c7c;font-weight:normal;">[Grundprofil] (Arbeitsp...</div>
<svg style="left:416px;top:965px;" width="8" height="6" viewBox="0 0 8 6"><path d="M0 0h8l-4 5z" fill="#7c7c7c"/></svg>
<svg style="left:430px;top:962px;" width="11" height="11" viewBox="0 0 11 11"><defs><radialGradient id="pf" cx="0.4" cy="0.35" r="0.7"><stop offset="0" stop-color="#8a8a8a"/><stop offset="1" stop-color="#555"/></radialGradient></defs><circle cx="5.5" cy="5.5" r="5" fill="url(#pf)"/></svg>
<div class="t" style="left:445px;top:965px;font-size:9.2px;color:#e0e0e0;font-weight:normal;">Preflight aus</div>
<svg style="left:516px;top:965px;" width="7" height="5" viewBox="0 0 7 5"><path d="M0 0h7l-3.5 4.5z" fill="#ddd"/></svg>
<div class="a" style="left:526px;top:960px;width:1189px;height:15px;background:#323232;border-left:1px solid #2a2a2a"></div>
<svg style="left:531px;top:963px;" width="7" height="10" viewBox="0 0 7 10"><path d="M6.5 0.5L0.5 5 6.5 9.5z" fill="#ddd"/></svg>
<div class="a" style="left:827px;top:961px;width:590px;height:13px;background:#8d8d8d"></div>
<svg style="left:1703px;top:963px;" width="7" height="10" viewBox="0 0 7 10"><path d="M0.5 0.5L6.5 5 0.5 9.5z" fill="#ddd"/></svg>
<div class="a" style="left:1715px;top:960px;width:38px;height:15px;background:#474747"></div>
<svg style="left:1720px;top:963px;" width="15" height="11" viewBox="0 0 15 11"><rect x="0.5" y="0.5" width="14" height="10" fill="#333" stroke="#e0e0e0"/><path d="M7.5 0.5v10" stroke="#e0e0e0"/></svg>
<svg style="left:1741px;top:963px;" width="9" height="10" viewBox="0 0 9 10"><rect x="8" y="9" width="1" height="1" fill="#cfcfcf"/><rect x="8" y="7" width="1" height="1" fill="#cfcfcf"/><rect x="8" y="5" width="1" height="1" fill="#cfcfcf"/><rect x="8" y="3" width="1" height="1" fill="#cfcfcf"/><rect x="8" y="1" width="1" height="1" fill="#cfcfcf"/><rect x="6" y="9" width="1" height="1" fill="#cfcfcf"/><rect x="6" y="7" width="1" height="1" fill="#cfcfcf"/><rect x="6" y="5" width="1" height="1" fill="#cfcfcf"/><rect x="6" y="3" width="1" height="1" fill="#cfcfcf"/><rect x="4" y="9" width="1" height="1" fill="#cfcfcf"/><rect x="4" y="7" width="1" height="1" fill="#cfcfcf"/><rect x="4" y="5" width="1" height="1" fill="#cfcfcf"/><rect x="2" y="9" width="1" height="1" fill="#cfcfcf"/><rect x="2" y="7" width="1" height="1" fill="#cfcfcf"/><rect x="0" y="9" width="1" height="1" fill="#cfcfcf"/></svg>
<div class="a" style="left:0px;top:975px;width:1919px;height:3px;background:#6b6b70"></div>
<div class="a" style="left:1737px;top:117px;width:16px;height:843px;background:#393939;border-left:1px solid #2c2c2c"></div>
<div class="a" style="left:1738px;top:131px;width:14px;height:435px;background:#8c8c8c"></div>
<svg style="left:1741px;top:950px;" width="9" height="6" viewBox="0 0 9 6"><path d="M0 0h8.5l-4.25 5z" fill="#e0e0e0"/></svg>
<div class="a" style="left:1753px;top:80px;width:166px;height:898px;background:#4a4a4a;border-left:2px solid #222"></div>
<div class="a" style="left:1756px;top:80px;width:163px;height:13px;background:#2c2c2c"></div>
<svg style="left:1907px;top:84px;" width="9" height="7" viewBox="0 0 9 7"><path d="M4 0L0 3.5L4 7z M8.5 0L4.5 3.5L8.5 7z" fill="#bbb"/></svg>
<svg style="left:1827px;top:96px;" width="20" height="5" viewBox="0 0 20 5"><rect x="0" y="0" width="1" height="4" fill="#151515"/><rect x="2" y="0" width="1" height="4" fill="#151515"/><rect x="4" y="0" width="1" height="4" fill="#151515"/><rect x="6" y="0" width="1" height="4" fill="#151515"/><rect x="8" y="0" width="1" height="4" fill="#151515"/><rect x="10" y="0" width="1" height="4" fill="#151515"/><rect x="12" y="0" width="1" height="4" fill="#151515"/><rect x="14" y="0" width="1" height="4" fill="#151515"/><rect x="16" y="0" width="1" height="4" fill="#151515"/><rect x="18" y="0" width="1" height="4" fill="#151515"/></svg>
<svg style="left:1765px;top:109px;" width="18" height="18" viewBox="0 0 18 18"><path d="M1 5l3-3h4v12H1z M10 2h4l3 3v9h-7z" fill="#cacaca"/><path d="M1 5h3V2z M17 5h-3V2z" fill="#8a8a8a"/><rect x="8.5" y="0" width="1.2" height="17" fill="#f0f0f0"/></svg>
<div class="t" style="left:1792px;top:112px;font-size:11px;color:#e6e6e6;font-weight:bold;">Seiten</div>
<div class="a" style="left:1759px;top:132px;width:157px;height:23px;background:#333333;border-radius:3px;box-shadow:inset 0 1px 0 #2a2a2a"></div>
<svg style="left:1765px;top:137px;" width="18" height="18" viewBox="0 0 18 18"><path d="M9 1.5L17 6.5 9 11.5 1 6.5z" fill="#d0d0d0"/><path d="M2.5 10.5L9 14.5 15.5 10.5 17 11.5 9 16.5 1 11.5z" fill="#d0d0d0"/></svg>
<div class="t" style="left:1792px;top:140px;font-size:11px;color:#e6e6e6;font-weight:bold;">Ebenen</div>
<svg style="left:1765px;top:165px;" width="18" height="18" viewBox="0 0 18 18"><path d="M6.5 3.5H5a4 4 0 0 0 0 8h1.5 M11.5 3.5H13a4 4 0 0 1 0 8h-1.5 M5.5 7.5h7" fill="none" stroke="#d0d0d0" stroke-width="2.2"/></svg>
<div class="t" style="left:1792px;top:168px;font-size:11px;color:#e6e6e6;font-weight:bold;">Verknüpfungen</div>
<div class="a" style="left:1756px;top:190px;width:163px;height:1px;background:#353535;border-bottom:1px solid #555;height:2px"></div>
<svg style="left:1827px;top:193px;" width="20" height="5" viewBox="0 0 20 5"><rect x="0" y="0" width="1" height="4" fill="#151515"/><rect x="2" y="0" width="1" height="4" fill="#151515"/><rect x="4" y="0" width="1" height="4" fill="#151515"/><rect x="6" y="0" width="1" height="4" fill="#151515"/><rect x="8" y="0" width="1" height="4" fill="#151515"/><rect x="10" y="0" width="1" height="4" fill="#151515"/><rect x="12" y="0" width="1" height="4" fill="#151515"/><rect x="14" y="0" width="1" height="4" fill="#151515"/><rect x="16" y="0" width="1" height="4" fill="#151515"/><rect x="18" y="0" width="1" height="4" fill="#151515"/></svg>
<svg style="left:1765px;top:206px;" width="18" height="18" viewBox="0 0 18 18"><rect x="0.5" y="1.5" width="17" height="12" fill="#5a5a5a" stroke="#cfcfcf"/><path d="M6.5 1.5v12 M12 1.5v12 M0.5 7.5h17" stroke="#cfcfcf"/><rect x="1.5" y="2.5" width="4.5" height="4.5" fill="#2a2a2a"/></svg>
<div class="t" style="left:1792px;top:209px;font-size:11px;color:#e6e6e6;font-weight:bold;">Farbfelder</div>
<svg style="left:1765px;top:234px;" width="18" height="18" viewBox="0 0 18 18"><path d="M0 2h17 M0 7h17 M0 12.5h17" stroke="#cfcfcf" stroke-width="2"/></svg>
<div class="t" style="left:1792px;top:237px;font-size:11px;color:#e6e6e6;font-weight:bold;">Kontur</div>
<svg style="left:1765px;top:262px;" width="18" height="18" viewBox="0 0 18 18"><defs><linearGradient id="dg" x1="0" x2="1"><stop offset="0" stop-color="#222"/><stop offset="1" stop-color="#eee"/></linearGradient></defs><rect x="0.5" y="0.5" width="17" height="13" fill="url(#dg)" stroke="#cfcfcf"/></svg>
<div class="t" style="left:1792px;top:265px;font-size:11px;color:#e6e6e6;font-weight:bold;">Verlauf</div>
<div class="a" style="left:1756px;top:287px;width:163px;height:1px;background:#353535;border-bottom:1px solid #555;height:2px"></div>
<svg style="left:1827px;top:290px;" width="20" height="5" viewBox="0 0 20 5"><rect x="0" y="0" width="1" height="4" fill="#151515"/><rect x="2" y="0" width="1" height="4" fill="#151515"/><rect x="4" y="0" width="1" height="4" fill="#151515"/><rect x="6" y="0" width="1" height="4" fill="#151515"/><rect x="8" y="0" width="1" height="4" fill="#151515"/><rect x="10" y="0" width="1" height="4" fill="#151515"/><rect x="12" y="0" width="1" height="4" fill="#151515"/><rect x="14" y="0" width="1" height="4" fill="#151515"/><rect x="16" y="0" width="1" height="4" fill="#151515"/><rect x="18" y="0" width="1" height="4" fill="#151515"/></svg>
<svg style="left:1765px;top:303px;" width="18" height="18" viewBox="0 0 18 18"><text x="9" y="13" font-family="Liberation Serif" font-style="italic" font-size="17" text-anchor="middle" fill="#cfcfcf">fx</text></svg>
<div class="t" style="left:1792px;top:306px;font-size:11px;color:#e6e6e6;font-weight:bold;">Effekte</div>
<div class="a" style="left:1756px;top:328px;width:163px;height:1px;background:#353535;border-bottom:1px solid #555;height:2px"></div>
<svg style="left:1827px;top:332px;" width="20" height="5" viewBox="0 0 20 5"><rect x="0" y="0" width="1" height="4" fill="#151515"/><rect x="2" y="0" width="1" height="4" fill="#151515"/><rect x="4" y="0" width="1" height="4" fill="#151515"/><rect x="6" y="0" width="1" height="4" fill="#151515"/><rect x="8" y="0" width="1" height="4" fill="#151515"/><rect x="10" y="0" width="1" height="4" fill="#151515"/><rect x="12" y="0" width="1" height="4" fill="#151515"/><rect x="14" y="0" width="1" height="4" fill="#151515"/><rect x="16" y="0" width="1" height="4" fill="#151515"/><rect x="18" y="0" width="1" height="4" fill="#151515"/></svg>
<svg style="left:1765px;top:344px;" width="18" height="18" viewBox="0 0 18 18"><rect x="0.5" y="8.5" width="6" height="6" fill="none" stroke="#cfcfcf"/><rect x="3.5" y="11.5" width="6" height="6" fill="#4a4a4a" stroke="#cfcfcf"/><text x="13" y="11" font-family="Liberation Sans" font-size="14" text-anchor="middle" fill="#cfcfcf">A</text></svg>
<div class="t" style="left:1792px;top:347px;font-size:11px;color:#e6e6e6;font-weight:bold;">Zeichenformate</div>
<svg style="left:1765px;top:372px;" width="18" height="18" viewBox="0 0 18 18"><rect x="0.5" y="8.5" width="6" height="6" fill="none" stroke="#cfcfcf"/><rect x="3.5" y="11.5" width="6" height="6" fill="#4a4a4a" stroke="#cfcfcf"/><path d="M11 1h6v14 M14 1v12" stroke="#cfcfcf" fill="none" stroke-width="1.5"/><circle cx="11.5" cy="4.5" r="3" fill="#cfcfcf"/></svg>
<div class="t" style="left:1792px;top:375px;font-size:11px;color:#e6e6e6;font-weight:bold;">Absatzformate</div>
<svg style="left:1765px;top:400px;" width="18" height="18" viewBox="0 0 18 18"><rect x="4.5" y="1.5" width="12" height="12" fill="#999" stroke="#cfcfcf"/><rect x="0.5" y="8.5" width="6" height="6" fill="#4a4a4a" stroke="#cfcfcf"/><rect x="3.5" y="11.5" width="6" height="6" fill="#4a4a4a" stroke="#cfcfcf"/></svg>
<div class="t" style="left:1792px;top:403px;font-size:11px;color:#e6e6e6;font-weight:bold;">Objektformate</div>
<div class="a" style="left:1756px;top:425px;width:163px;height:1px;background:#353535;border-bottom:1px solid #555;height:2px"></div>
<svg style="left:1827px;top:429px;" width="20" height="5" viewBox="0 0 20 5"><rect x="0" y="0" width="1" height="4" fill="#151515"/><rect x="2" y="0" width="1" height="4" fill="#151515"/><rect x="4" y="0" width="1" height="4" fill="#151515"/><rect x="6" y="0" width="1" height="4" fill="#151515"/><rect x="8" y="0" width="1" height="4" fill="#151515"/><rect x="10" y="0" width="1" height="4" fill="#151515"/><rect x="12" y="0" width="1" height="4" fill="#151515"/><rect x="14" y="0" width="1" height="4" fill="#151515"/><rect x="16" y="0" width="1" height="4" fill="#151515"/><rect x="18" y="0" width="1" height="4" fill="#151515"/></svg>
<svg style="left:1765px;top:441px;" width="18" height="18" viewBox="0 0 18 18"><rect x="1.5" y="1.5" width="15" height="13" fill="none" stroke="#cfcfcf"/><path d="M1.5 4.5h15 M5.5 1.5v13 M5.5 8h11 M5.5 11.5h11" stroke="#cfcfcf"/></svg>
<div class="t" style="left:1792px;top:444px;font-size:11px;color:#e6e6e6;font-weight:bold;">Tabelle</div>
<svg style="left:1765px;top:469px;" width="18" height="18" viewBox="0 0 18 18"><rect x="4.5" y="1.5" width="12" height="11" fill="none" stroke="#cfcfcf"/><path d="M7.5 4.5h9 M7.5 7.5h9 M7.5 10h9" stroke="#cfcfcf"/><rect x="0.5" y="8.5" width="6" height="6" fill="#4a4a4a" stroke="#cfcfcf"/><rect x="3.5" y="11.5" width="6" height="6" fill="#4a4a4a" stroke="#cfcfcf"/></svg>
<div class="t" style="left:1792px;top:472px;font-size:11px;color:#e6e6e6;font-weight:bold;">Tabellenformate</div>
<svg style="left:1765px;top:497px;" width="18" height="18" viewBox="0 0 18 18"><rect x="4.5" y="1.5" width="12" height="11" fill="none" stroke="#cfcfcf"/><path d="M4.5 4.5h12" stroke="#cfcfcf"/><rect x="11" y="6" width="5" height="6" fill="#cfcfcf"/><rect x="0.5" y="8.5" width="6" height="6" fill="#4a4a4a" stroke="#cfcfcf"/><rect x="3.5" y="11.5" width="6" height="6" fill="#4a4a4a" stroke="#cfcfcf"/></svg>
<div class="t" style="left:1792px;top:500px;font-size:11px;color:#e6e6e6;font-weight:bold;">Zellenformate</div>
<div class="a" style="left:1756px;top:522px;width:163px;height:1px;background:#353535;border-bottom:1px solid #555;height:2px"></div>
<svg style="left:1827px;top:527px;" width="20" height="5" viewBox="0 0 20 5"><rect x="0" y="0" width="1" height="4" fill="#151515"/><rect x="2" y="0" width="1" height="4" fill="#151515"/><rect x="4" y="0" width="1" height="4" fill="#151515"/><rect x="6" y="0" width="1" height="4" fill="#151515"/><rect x="8" y="0" width="1" height="4" fill="#151515"/><rect x="10" y="0" width="1" height="4" fill="#151515"/><rect x="12" y="0" width="1" height="4" fill="#151515"/><rect x="14" y="0" width="1" height="4" fill="#151515"/><rect x="16" y="0" width="1" height="4" fill="#151515"/><rect x="18" y="0" width="1" height="4" fill="#151515"/></svg>
<svg style="left:1765px;top:538px;" width="18" height="18" viewBox="0 0 18 18"><path d="M7.5 1.5h6l3 3v4" fill="none" stroke="#cfcfcf"/><path d="M0 7h6 M4 4l3 3-3 3" stroke="#eee" stroke-width="2" fill="none"/><circle cx="13" cy="13" r="3" fill="none" stroke="#e0e0e0" stroke-width="2.5" stroke-dasharray="1.5 1"/></svg>
<div class="t" style="left:1792px;top:541px;font-size:11px;color:#e6e6e6;font-weight:bold;">Datenzusammenführ...</div>
<svg style="left:1765px;top:566px;" width="18" height="18" viewBox="0 0 18 18"><path d="M12 1C6 1 4 4 7 7s1 6-5 7c5 2 11 0 10-4s-3-5 0-8z" fill="#cfcfcf"/></svg>
<div class="t" style="left:1792px;top:569px;font-size:11px;color:#e6e6e6;font-weight:bold;">Skripte</div>
<div class="a" style="left:1756px;top:591px;width:163px;height:1px;background:#353535;border-bottom:1px solid #555;height:2px"></div>
<svg style="left:1827px;top:595px;" width="20" height="5" viewBox="0 0 20 5"><rect x="0" y="0" width="1" height="4" fill="#151515"/><rect x="2" y="0" width="1" height="4" fill="#151515"/><rect x="4" y="0" width="1" height="4" fill="#151515"/><rect x="6" y="0" width="1" height="4" fill="#151515"/><rect x="8" y="0" width="1" height="4" fill="#151515"/><rect x="10" y="0" width="1" height="4" fill="#151515"/><rect x="12" y="0" width="1" height="4" fill="#151515"/><rect x="14" y="0" width="1" height="4" fill="#151515"/><rect x="16" y="0" width="1" height="4" fill="#151515"/><rect x="18" y="0" width="1" height="4" fill="#151515"/></svg>
<svg style="left:1765px;top:607px;" width="18" height="18" viewBox="0 0 18 18"><text x="9" y="15" font-family="Liberation Serif" font-style="italic" font-size="19" text-anchor="middle" fill="#cfcfcf">A</text></svg>
<div class="t" style="left:1792px;top:610px;font-size:11px;color:#e6e6e6;font-weight:bold;">Glyphen</div>
<svg style="left:1765px;top:635px;" width="18" height="18" viewBox="0 0 18 18"><text x="7" y="14" font-family="Liberation Sans" font-size="16" text-anchor="middle" fill="#cfcfcf">A</text><rect x="15" y="0" width="1" height="17" fill="#cfcfcf"/></svg>
<div class="t" style="left:1792px;top:638px;font-size:11px;color:#e6e6e6;font-weight:bold;">Zeichen</div>
<svg style="left:1765px;top:663px;" width="18" height="18" viewBox="0 0 18 18"><path d="M7 2h7v14 M11 2v14" stroke="#cfcfcf" fill="none" stroke-width="1.6"/><path d="M7 2a3.5 3.5 0 0 0 0 7z" fill="#cfcfcf"/></svg>
<div class="t" style="left:1792px;top:666px;font-size:11px;color:#e6e6e6;font-weight:bold;">Absatz</div>
<div class="a" style="left:1756px;top:687px;width:163px;height:1px;background:#353535;border-bottom:1px solid #555;height:2px"></div>
<div class="a" style="left:1545px;top:90px;width:208px;height:465px;background:#4a4a4a;border:1px solid #262626;border-top:none"></div>
<div class="a" style="left:1545px;top:90px;width:208px;height:4px;background:#1f1f1f"></div>
<div class="a" style="left:1545px;top:94px;width:208px;height:17px;background:#2f2f2f"></div>
<div class="t" style="left:1552px;top:98px;font-size:10.5px;color:#9a9a9a;font-weight:bold;width:31px;overflow:hidden">Seiten</div>
<div class="a" style="left:1584px;top:94px;width:56px;height:18px;background:#474747"></div>
<svg style="left:1587px;top:97px;" width="6" height="11" viewBox="0 0 6 11"><path d="M0.5 4.5L3 1.5 5.5 4.5 M0.5 6.5L3 9.5 5.5 6.5" stroke="#ddd" fill="none"/></svg>
<div class="t" style="left:1596px;top:98px;font-size:10.3px;color:#ececec;font-weight:bold;">Ebenen</div>
<div class="a" style="left:1640px;top:94px;width:1px;height:17px;background:#262626"></div>
<div class="t" style="left:1646px;top:98px;font-size:10.5px;color:#9a9a9a;font-weight:bold;">Verknüp</div>
<svg style="left:1712px;top:97px;" width="11" height="9" viewBox="0 0 11 9"><path d="M0 0l4.5 4.5L0 9z M5 0l4.5 4.5L5 9z" fill="#c8c8c8"/></svg>
<div class="a" style="left:1728px;top:96px;width:1px;height:13px;background:#3a3a3a"></div>
<div class="a" style="left:1730px;top:96px;width:1px;height:13px;background:#3a3a3a"></div>
<svg style="left:1735px;top:98px;" width="15" height="9" viewBox="0 0 15 9"><path d="M0 2h4l-2 2.5z" fill="#ddd"/><path d="M5 0.5h9 M5 3h9 M5 5.5h9 M5 8h9" stroke="#d8d8d8" stroke-width="1"/></svg>
<div class="a" style="left:1546px;top:111px;width:206px;height:1px;background:#3a3a3a"></div>
<div class="a" style="left:1546px;top:112px;width:195px;height:19px;background:#494949"></div>
<div class="a" style="left:1588px;top:112px;width:152px;height:19px;background:#4b5668"></div>
<div class="a" style="left:1546px;top:131px;width:195px;height:1px;background:#333"></div>
<div class="a" style="left:1546px;top:150px;width:195px;height:1px;background:#333"></div>
<div class="a" style="left:1566px;top:112px;width:1px;height:38px;background:#383838"></div>
<svg style="left:1549px;top:117px;" width="15" height="11" viewBox="0 0 15 11"><path d="M0.5 5.5C3 1 12 1 14.5 5.5 12 10 3 10 0.5 5.5z" fill="#dcdcdc"/><circle cx="7.5" cy="5.5" r="3.2" fill="#3a3a3a"/><circle cx="8.3" cy="4.5" r="0.9" fill="#ddd"/></svg>
<div class="a" style="left:1584px;top:115px;width:3px;height:15px;background:#f2f2f2"></div>
<div class="a" style="left:1584px;top:134px;width:3px;height:15px;background:#e2651c"></div>
<svg style="left:1594px;top:118px;" width="6" height="10" viewBox="0 0 6 10"><path d="M0 0l5.5 5L0 10z" fill="#bfc6d6"/></svg>
<svg style="left:1594px;top:137px;" width="6" height="10" viewBox="0 0 6 10"><path d="M0 0l5.5 5L0 10z" fill="#b8b8b8"/></svg>
<div class="t" style="left:1602px;top:119px;font-size:9.2px;color:#ffffff;font-weight:bold;">Meine Ebene</div>
<div class="t" style="left:1602px;top:138px;font-size:9.2px;color:#e0e0e0;font-weight:normal;">Vorlage</div>
<svg style="left:1704px;top:115px;" width="15" height="15" viewBox="0 0 15 15"><path d="M1 14l1.5-5.5L8 4l3 3-4.5 5.5z" fill="#d4d8e0" stroke="#2a3140" stroke-width="0.5"/><path d="M8.5 3.5l2-2 3 3-2 2z" fill="#e8e8e8"/><path d="M9.5 2.5l3 3 M10.5 1.5l3 3" stroke="#4b5668" stroke-width="0.6"/><path d="M1 14l4-4" stroke="#2a3140" stroke-width="0.8"/><circle cx="5.5" cy="9.5" r="0.9" fill="#2a3140"/></svg>
<svg style="left:1727px;top:118px;" width="8" height="8" viewBox="0 0 8 8"><rect x="0.5" y="0.5" width="7" height="7" fill="none" stroke="#1e2633"/></svg>
<svg style="left:1727px;top:137px;" width="8" height="8" viewBox="0 0 8 8"><rect x="0.5" y="0.5" width="7" height="7" fill="none" stroke="#2a2a2a"/></svg>
<div class="a" style="left:1741px;top:112px;width:12px;height:419px;background:#3f3f3f"></div>
<svg style="left:1743px;top:117px;" width="8" height="5" viewBox="0 0 8 5"><path d="M0 4.5L3.5 0.5 7 4.5z" fill="#666"/></svg>
<svg style="left:1743px;top:520px;" width="8" height="5" viewBox="0 0 8 5"><path d="M0 0.5L3.5 4.5 7 0.5z" fill="#666"/></svg>
<div class="a" style="left:1546px;top:531px;width:206px;height:17px;background:#4a4a4a;border-top:1px solid #303030"></div>
<div class="t" style="left:1550px;top:535px;font-size:9.2px;color:#dedede;font-weight:normal;">Seite: 2, 2 Ebenen</div>
<svg style="left:1688px;top:532px;" width="11" height="11" viewBox="0 0 11 11"><path d="M3 0.5h7.5v9.5H3z" fill="#d8d8d8"/><path d="M0.5 3.5h5v6.5z" fill="#4a4a4a"/></svg>
<svg style="left:1717px;top:531px;" width="11" height="13" viewBox="0 0 11 13"><path d="M0.5 2.5h10 M3.5 2.5V0.8h4v1.7 M1.5 3v9h8V3" fill="none" stroke="#d0d0d0"/><path d="M3.5 4.5v6 M5.5 4.5v6 M7.5 4.5v6" stroke="#d0d0d0"/></svg>
<svg style="left:1744px;top:538px;" width="8" height="8" viewBox="0 0 8 8"><rect x="7" y="7" width="1" height="1" fill="#222"/><rect x="7" y="5" width="1" height="1" fill="#222"/><rect x="7" y="3" width="1" height="1" fill="#222"/><rect x="7" y="1" width="1" height="1" fill="#222"/><rect x="5" y="7" width="1" height="1" fill="#222"/><rect x="5" y="5" width="1" height="1" fill="#222"/><rect x="5" y="3" width="1" height="1" fill="#222"/><rect x="3" y="7" width="1" height="1" fill="#222"/><rect x="3" y="5" width="1" height="1" fill="#222"/><rect x="1" y="7" width="1" height="1" fill="#222"/></svg>
<div class="a" style="left:1546px;top:548px;width:206px;height:1px;background:#303030"></div>
<svg style="left:1640px;top:549px;" width="20" height="5" viewBox="0 0 20 5"><rect x="0" y="0" width="1" height="4" fill="#151515"/><rect x="2" y="0" width="1" height="4" fill="#151515"/><rect x="4" y="0" width="1" height="4" fill="#151515"/><rect x="6" y="0" width="1" height="4" fill="#151515"/><rect x="8" y="0" width="1" height="4" fill="#151515"/><rect x="10" y="0" width="1" height="4" fill="#151515"/><rect x="12" y="0" width="1" height="4" fill="#151515"/><rect x="14" y="0" width="1" height="4" fill="#151515"/><rect x="16" y="0" width="1" height="4" fill="#151515"/><rect x="18" y="0" width="1" height="4" fill="#151515"/></svg>
<div class="a" style="left:358px;top:223px;width:1088px;height:552px;border:1px solid #d2727f"></div>
<div class="a" style="left:365px;top:230px;width:1075px;height:539px;background:#fff;border-left:1px solid #000;border-top:1px solid #000;border-right:2px solid #000;border-bottom:2px solid #000"></div>
<div class="a" style="left:376px;top:241px;width:1052px;height:516px;border:1px solid #b04cd2"></div>
<div class="a" style="left:100px;top:473px;width:209px;height:367px;background:#4a4a4a;border:1px solid #262626;border-radius:3px 3px 0 0"></div>
<div class="a" style="left:101px;top:473px;width:207px;height:13px;background:#2d2d2d;border-radius:3px 3px 0 0"></div>
<svg style="left:106px;top:476px;" width="7" height="7" viewBox="0 0 7 7"><path d="M0.5 0.5l6 6 M6.5 0.5l-6 6" stroke="#ccc" stroke-width="1.3"/></svg>
<svg style="left:295px;top:476px;" width="9" height="7" viewBox="0 0 9 7"><path d="M4 0L0 3.5L4 7z M8.5 0L4.5 3.5L8.5 7z" fill="#bbb"/></svg>
<div class="a" style="left:101px;top:486px;width:207px;height:16px;background:#2f2f2f"></div>
<div class="a" style="left:101px;top:486px;width:75px;height:17px;background:#484848"></div>
<svg style="left:105px;top:489px;" width="6" height="11" viewBox="0 0 6 11"><path d="M0.5 4.5L3 1.5 5.5 4.5 M0.5 6.5L3 9.5 5.5 6.5" stroke="#ddd" fill="none"/></svg>
<div class="t" style="left:113px;top:489px;font-size:10.6px;color:#ececec;font-weight:bold;">Ausrichten</div>
<div class="t" style="left:183px;top:489px;font-size:10.6px;color:#9a9a9a;font-weight:bold;">Pathfinder</div>
<div class="a" style="left:241px;top:486px;width:1px;height:16px;background:#262626"></div>
<svg style="left:290px;top:490px;" width="15" height="9" viewBox="0 0 15 9"><path d="M0 2h4l-2 2.5z" fill="#ddd"/><path d="M5 0.5h9 M5 3h9 M5 5.5h9 M5 8h9" stroke="#d8d8d8" stroke-width="1"/></svg>
<div class="t" style="left:105px;top:511px;font-size:9.3px;color:#dedede;font-weight:normal;">Objekte ausrichten:</div>
<svg style="left:111px;top:524px;" width="17" height="16" viewBox="0 0 17 16"><path d="M0.5 0L0.5 15" stroke="#d0d0d0" stroke-width="1"/><rect x="2" y="2" width="6" height="5" fill="#c8c8c8"/><rect x="2.5" y="9.5" width="11" height="5" fill="#4a4a4a" stroke="#d0d0d0"/></svg>
<svg style="left:143px;top:524px;" width="17" height="16" viewBox="0 0 17 16"><path d="M6.5 0L6.5 15" stroke="#d0d0d0" stroke-width="1"/><rect x="4" y="2" width="6" height="5" fill="#c8c8c8"/><rect x="1.5" y="9.5" width="11" height="5" fill="#4a4a4a" stroke="#d0d0d0"/></svg>
<svg style="left:176px;top:524px;" width="17" height="16" viewBox="0 0 17 16"><path d="M13.5 0L13.5 15" stroke="#d0d0d0" stroke-width="1"/><rect x="6" y="2" width="7" height="5" fill="#c8c8c8"/><rect x="1.5" y="9.5" width="11" height="5" fill="#4a4a4a" stroke="#d0d0d0"/></svg>
<svg style="left:216px;top:524px;" width="17" height="16" viewBox="0 0 17 16"><path d="M0 0.5L14 0.5" stroke="#d0d0d0" stroke-width="1"/><rect x="1.5" y="2.5" width="4" height="11" fill="#4a4a4a" stroke="#d0d0d0"/><rect x="8" y="2" width="5" height="6" fill="#c8c8c8"/></svg>
<svg style="left:247px;top:525px;" width="17" height="16" viewBox="0 0 17 16"><path d="M0 7.5L16 7.5" stroke="#d0d0d0" stroke-width="1"/><rect x="2.5" y="1.5" width="4" height="12" fill="#4a4a4a" stroke="#d0d0d0"/><rect x="9" y="4" width="6" height="7" fill="#c8c8c8"/></svg>
<svg style="left:280px;top:524px;" width="17" height="16" viewBox="0 0 17 16"><path d="M0 14.5L14 14.5" stroke="#d0d0d0" stroke-width="1"/><rect x="1.5" y="2.5" width="4" height="11" fill="#4a4a4a" stroke="#d0d0d0"/><rect x="8" y="6" width="5" height="7" fill="#c8c8c8"/></svg>
<div class="a" style="left:105px;top:545px;width:197px;height:1px;background:#3a3a3a;border-bottom:1px solid #5a5a5a;height:2px"></div>
<div class="t" style="left:105px;top:551px;font-size:9.3px;color:#dedede;font-weight:normal;">Objekte verteilen:</div>
<svg style="left:109px;top:564px;" width="17" height="17" viewBox="0 0 17 17"><path d="M0 0.5L16 0.5" stroke="#d0d0d0" stroke-width="1"/><rect x="5" y="1" width="6" height="5" fill="#c8c8c8"/><path d="M0 7.5L16 7.5" stroke="#d0d0d0" stroke-width="1"/><rect x="3.5" y="8.5" width="9" height="6" fill="#4a4a4a" stroke="#d0d0d0"/></svg>
<svg style="left:141px;top:564px;" width="17" height="17" viewBox="0 0 17 17"><path d="M0 3.5L16 3.5" stroke="#d0d0d0" stroke-width="1"/><rect x="5" y="1" width="6" height="5" fill="#c8c8c8"/><path d="M0 11.5L16 11.5" stroke="#d0d0d0" stroke-width="1"/><rect x="3.5" y="8.5" width="9" height="6" fill="#4a4a4a" stroke="#d0d0d0"/></svg>
<svg style="left:174px;top:564px;" width="17" height="17" viewBox="0 0 17 17"><path d="M0 6.5L16 6.5" stroke="#d0d0d0" stroke-width="1"/><rect x="5" y="1" width="6" height="5" fill="#c8c8c8"/><path d="M0 14.5L16 14.5" stroke="#d0d0d0" stroke-width="1"/><rect x="3.5" y="8.5" width="9" height="6" fill="#4a4a4a" stroke="#d0d0d0"/></svg>
<svg style="left:217px;top:563px;" width="17" height="17" viewBox="0 0 17 17"><path d="M0.5 0L0.5 16" stroke="#d0d0d0" stroke-width="1"/><rect x="1.5" y="3.5" width="3" height="9" fill="#4a4a4a" stroke="#d0d0d0"/><path d="M7.5 0L7.5 16" stroke="#d0d0d0" stroke-width="1"/><rect x="8" y="5" width="5" height="6" fill="#c8c8c8"/></svg>
<svg style="left:248px;top:563px;" width="17" height="17" viewBox="0 0 17 17"><path d="M3.5 0L3.5 16" stroke="#d0d0d0" stroke-width="1"/><rect x="1.5" y="3.5" width="3" height="9" fill="#4a4a4a" stroke="#d0d0d0"/><path d="M11.5 0L11.5 16" stroke="#d0d0d0" stroke-width="1"/><rect x="8" y="5" width="5" height="6" fill="#c8c8c8"/></svg>
<svg style="left:279px;top:563px;" width="17" height="17" viewBox="0 0 17 17"><path d="M6.5 0L6.5 16" stroke="#d0d0d0" stroke-width="1"/><rect x="1" y="5" width="5" height="6" fill="#c8c8c8"/><path d="M13.5 0L13.5 16" stroke="#d0d0d0" stroke-width="1"/><rect x="8.5" y="3.5" width="4" height="9" fill="#4a4a4a" stroke="#d0d0d0"/></svg>
<svg style="left:107px;top:586px;" width="12" height="12" viewBox="0 0 12 12"><defs><linearGradient id="cbg" x1="0" y1="0" x2="0" y2="1"><stop offset="0" stop-color="#5e5e5e"/><stop offset="1" stop-color="#484848"/></linearGradient></defs><rect x="0.5" y="0.5" width="11" height="11" rx="1.2" fill="url(#cbg)" stroke="#262626"/></svg>
<div class="t" style="left:123px;top:588px;font-size:9.3px;color:#dedede;font-weight:normal;">Abstand verwenden</div>
<svg style="left:217px;top:586px;" width="14" height="13" viewBox="0 0 14 13"><rect x="0.5" y="0.5" width="13" height="12" fill="#4a4a4a" stroke="#2f2f2f"/><path d="M3.5 5.0L7.0 1.5L10.5 5.0z M3.5 8.0L7.0 11.5L10.5 8.0z" fill="#6d6d6d"/><rect x="1" y="6.0" width="12" height="1" fill="#2a2a2a"/></svg>
<div class="a" style="left:232px;top:586px;width:47px;height:13px;background:#a9a9a9;border:1px solid #2e2e2e"></div>
<div class="t" style="left:235px;top:589px;font-size:9px;color:#7a7a7a;font-weight:normal;">0 mm</div>
<div class="t" style="left:157px;top:614px;font-size:9.3px;color:#dedede;font-weight:normal;">Ausrichten an:</div>
<svg style="left:220px;top:608px;" width="21" height="19" viewBox="0 0 21 19"><path d="M0.5 0v18" stroke="#d0d0d0"/><path d="M2.5 2.5h7l3 3v8h-10z" fill="none" stroke="#d0d0d0"/><path d="M4 8h7 M4 10.5h7" stroke="#d0d0d0"/><path d="M14 12h6l-3 3z" fill="#ddd"/></svg>
<div class="a" style="left:105px;top:633px;width:197px;height:1px;background:#3a3a3a;border-bottom:1px solid #5a5a5a;height:2px"></div>
<div class="t" style="left:106px;top:641px;font-size:9.3px;color:#dedede;font-weight:normal;">Abstand verteilen:</div>
<svg style="left:111px;top:656px;" width="16" height="15" viewBox="0 0 16 15"><path d="M0 5.5L4 5.5" stroke="#d0d0d0" stroke-width="1"/><rect x="5" y="0" width="7" height="6" fill="#c8c8c8"/><rect x="2.5" y="7.5" width="11" height="6" fill="#4a4a4a" stroke="#d0d0d0"/><path d="M0 8.5L4 8.5" stroke="#d0d0d0" stroke-width="1"/></svg>
<svg style="left:144px;top:656px;" width="15" height="15" viewBox="0 0 15 15"><path d="M5.5 0L5.5 4" stroke="#d0d0d0" stroke-width="1"/><rect x="0.5" y="4.5" width="4" height="9" fill="#4a4a4a" stroke="#d0d0d0"/><rect x="7" y="3" width="6" height="6" fill="#c8c8c8"/><path d="M5.5 11L5.5 15" stroke="#d0d0d0" stroke-width="1"/></svg>
<svg style="left:108px;top:678px;" width="12" height="12" viewBox="0 0 12 12"><defs><linearGradient id="cbg" x1="0" y1="0" x2="0" y2="1"><stop offset="0" stop-color="#5e5e5e"/><stop offset="1" stop-color="#484848"/></linearGradient></defs><rect x="0.5" y="0.5" width="11" height="11" rx="1.2" fill="url(#cbg)" stroke="#262626"/><path d="M2.5 5.5L5.2 8.8L11.8 -0.8" fill="none" stroke="#f2f2f2" stroke-width="1.3"/></svg>
<div class="t" style="left:124px;top:680px;font-size:9.3px;color:#dedede;font-weight:normal;">Abstand verwenden</div>
<svg style="left:218px;top:677px;" width="14" height="13" viewBox="0 0 14 13"><rect x="0.5" y="0.5" width="13" height="12" fill="#474747" stroke="#2f2f2f"/><path d="M3.5 5.0L7.0 1.5L10.5 5.0z M3.5 8.0L7.0 11.5L10.5 8.0z" fill="#dcdcdc"/><rect x="1" y="6.0" width="12" height="1" fill="#2a2a2a"/></svg>
<div class="a" style="left:233px;top:677px;width:47px;height:13px;background:#a9a9a9;border:1px solid #2e2e2e"></div>
<div class="t" style="left:236px;top:680px;font-size:9.3px;color:#1d1d1d;font-weight:normal;">13,25 mm</div>
<div class="a" style="left:101px;top:697px;width:207px;height:2px;background:#2a2a2a"></div>
<div class="a" style="left:101px;top:699px;width:207px;height:16px;background:#2f2f2f"></div>
<div class="a" style="left:101px;top:699px;width:92px;height:17px;background:#484848"></div>
<svg style="left:105px;top:702px;" width="6" height="11" viewBox="0 0 6 11"><path d="M0.5 4.5L3 1.5 5.5 4.5 M0.5 6.5L3 9.5 5.5 6.5" stroke="#ddd" fill="none"/></svg>
<div class="t" style="left:114px;top:703px;font-size:10.8px;color:#ececec;font-weight:bold;">Informationen</div>
<svg style="left:290px;top:703px;" width="15" height="9" viewBox="0 0 15 9"><path d="M0 2h4l-2 2.5z" fill="#ddd"/><path d="M5 0.5h9 M5 3h9 M5 5.5h9 M5 8h9" stroke="#d8d8d8" stroke-width="1"/></svg>
<div class="a" style="left:203px;top:718px;width:1px;height:38px;background:#3a3a3a"></div>
<div class="a" style="left:203px;top:759px;width:1px;height:26px;background:#3a3a3a"></div>
<div class="a" style="left:104px;top:757px;width:201px;height:1px;background:#3a3a3a;border-bottom:1px solid #575757;height:2px"></div>
<div class="a" style="left:104px;top:786px;width:201px;height:1px;background:#3a3a3a;border-bottom:1px solid #575757;height:2px"></div>
<svg style="left:105px;top:730px;" width="13" height="12" viewBox="0 0 13 12"><path d="M5.5 0v11 M0 5.5h11" stroke="#ddd" stroke-width="1.2"/><path d="M9.5 8l3 2-3 2z" fill="#ddd"/></svg>
<div class="t" style="left:124px;top:723px;font-size:9.2px;color:#dedede;font-weight:normal;">X: 326 mm</div>
<div class="t" style="left:124px;top:735px;font-size:9.2px;color:#dedede;font-weight:normal;">Y: -18,333 mm</div>
<div class="t" style="left:124px;top:747px;font-size:9.2px;color:#dedede;font-weight:normal;">D:</div>
<svg style="left:208px;top:730px;" width="12" height="12" viewBox="0 0 12 12"><path d="M1.5 4v7 M1.5 1.5h7" stroke="#ddd" fill="none"/><path d="M4 10.5h6.5V4" stroke="#ddd" stroke-dasharray="1 1" fill="none"/><path d="M7 0l3 1.5-3 1.5z" fill="#ddd"/></svg>
<div class="t" style="left:227px;top:723px;font-size:9.2px;color:#dedede;font-weight:normal;">B:</div>
<div class="t" style="left:227px;top:735px;font-size:9.2px;color:#dedede;font-weight:normal;">H:</div>
<svg style="left:224px;top:745px;" width="11" height="8" viewBox="0 0 11 8"><path d="M0.5 7.5h10 L5.5 0.5z" fill="none" stroke="#ddd"/><path d="M5 7.5a3 3 0 0 0-1.5-3" stroke="#ddd" fill="none"/></svg>
<div class="t" style="left:104px;top:794px;font-size:9.2px;color:#dedede;font-weight:normal;width:100px;text-align:right">Position:</div>
<div class="t" style="left:104px;top:806px;font-size:9.2px;color:#dedede;font-weight:normal;width:100px;text-align:right">Letzte Änderung:</div>
<div class="t" style="left:104px;top:818px;font-size:9.2px;color:#dedede;font-weight:normal;width:100px;text-align:right">Autor:</div>
<div class="t" style="left:104px;top:830px;font-size:9.2px;color:#dedede;font-weight:normal;width:100px;text-align:right">Dateigröße:</div>
<div class="a" style="left:748px;top:419px;width:420px;height:193px;border-radius:5px;box-shadow:0 14px 38px 4px rgba(0,0,0,0.42), 0 0 0 1px rgba(0,0,0,0.25)"></div>
<div class="a" style="left:748px;top:419px;width:420px;height:193px;background:#4e4e4e;border-radius:5px 5px 3px 3px;overflow:hidden"><div class="a" style="left:0;top:0;width:420px;height:23px;background:linear-gradient(#f1f1f1,#e4e4e4 60%,#d8d8d8);border-bottom:1px solid #b0b0b0"></div></div>
<div class="t" style="left:748px;top:424px;font-size:13.5px;color:#4a4a4a;font-weight:normal;width:420px;text-align:center">Ebenenoptionen</div>
<div class="t" style="left:750px;top:462px;font-size:12px;color:#ececec;font-weight:normal;width:62px;text-align:right">Name:</div>
<div class="t" style="left:750px;top:487px;font-size:12px;color:#ececec;font-weight:normal;width:62px;text-align:right">Farbe:</div>
<div class="a" style="left:818px;top:457px;width:230px;height:20px;background:#b7b7b7;border:1px solid #d98a2b;box-shadow:inset 0 0 0 1px #8a6a3a"></div>
<div class="t" style="left:822px;top:462px;font-size:12.1px;color:#111;font-weight:normal;">Meine Ebene</div>
<div class="a" style="left:893px;top:460px;width:1px;height:14px;background:#111"></div>
<div class="a" style="left:819px;top:484px;width:173px;height:17px;background:#b0b0b0;border:1px solid #303030;border-top-color:#2a2a2a"></div>
<div class="a" style="left:822px;top:486px;width:12px;height:12px;background:#a3173c;border:1px solid #2a0c14"></div>
<div class="t" style="left:837px;top:488px;font-size:12.1px;color:#111;font-weight:normal;">Weinrot</div>
<svg style="left:977px;top:484px;" width="15" height="17" viewBox="0 0 15 17"><rect x="0.5" y="0.5" width="14" height="16" fill="#4d4d4d" stroke="#303030"/><path d="M3.5 6h8l-4 5z" fill="#e6e6e6"/></svg>
<div class="a" style="left:1058px;top:457px;width:95px;height:20px;background:linear-gradient(#575757,#4a4a4a);border:2px solid #1f1f1f;border-radius:2px"></div>
<div class="t" style="left:1058px;top:462px;font-size:12.5px;color:#f0f0f0;font-weight:normal;width:95px;text-align:center">OK</div>
<div class="a" style="left:1059px;top:488px;width:93px;height:18px;background:linear-gradient(#585858,#4c4c4c);border:1px solid #2a2a2a;border-radius:2px"></div>
<div class="t" style="left:1059px;top:492px;font-size:12.2px;color:#ececec;font-weight:normal;width:93px;text-align:center">Abbrechen</div>
<svg style="left:819px;top:523px;" width="12" height="12" viewBox="0 0 12 12"><defs><linearGradient id="cbg" x1="0" y1="0" x2="0" y2="1"><stop offset="0" stop-color="#5e5e5e"/><stop offset="1" stop-color="#484848"/></linearGradient></defs><rect x="0.5" y="0.5" width="11" height="11" rx="1.2" fill="url(#cbg)" stroke="#262626"/><path d="M2.5 5.5L5.2 8.8L11.8 -0.8" fill="none" stroke="#f2f2f2" stroke-width="1.3"/></svg>
<div class="t" style="left:835px;top:522px;font-size:12.2px;color:#ebebeb;font-weight:normal;">Ebene einblenden</div>
<svg style="left:954px;top:523px;" width="12" height="12" viewBox="0 0 12 12"><defs><linearGradient id="cbg" x1="0" y1="0" x2="0" y2="1"><stop offset="0" stop-color="#5e5e5e"/><stop offset="1" stop-color="#484848"/></linearGradient></defs><rect x="0.5" y="0.5" width="11" height="11" rx="1.2" fill="url(#cbg)" stroke="#262626"/><path d="M2.5 5.5L5.2 8.8L11.8 -0.8" fill="none" stroke="#f2f2f2" stroke-width="1.3"/></svg>
<div class="t" style="left:970px;top:522px;font-size:12.2px;color:#ebebeb;font-weight:normal;">Hilfslinien einblenden</div>
<svg style="left:819px;top:543px;" width="12" height="12" viewBox="0 0 12 12"><defs><linearGradient id="cbg" x1="0" y1="0" x2="0" y2="1"><stop offset="0" stop-color="#5e5e5e"/><stop offset="1" stop-color="#484848"/></linearGradient></defs><rect x="0.5" y="0.5" width="11" height="11" rx="1.2" fill="url(#cbg)" stroke="#262626"/></svg>
<div class="t" style="left:835px;top:542px;font-size:12.2px;color:#ebebeb;font-weight:normal;">Ebene sperren</div>
<svg style="left:954px;top:543px;" width="12" height="12" viewBox="0 0 12 12"><defs><linearGradient id="cbg" x1="0" y1="0" x2="0" y2="1"><stop offset="0" stop-color="#5e5e5e"/><stop offset="1" stop-color="#484848"/></linearGradient></defs><rect x="0.5" y="0.5" width="11" height="11" rx="1.2" fill="url(#cbg)" stroke="#262626"/></svg>
<div class="t" style="left:970px;top:542px;font-size:12.2px;color:#ebebeb;font-weight:normal;">Hilfslinien sperren</div>
<svg style="left:819px;top:563px;" width="12" height="12" viewBox="0 0 12 12"><defs><linearGradient id="cbg" x1="0" y1="0" x2="0" y2="1"><stop offset="0" stop-color="#5e5e5e"/><stop offset="1" stop-color="#484848"/></linearGradient></defs><rect x="0.5" y="0.5" width="11" height="11" rx="1.2" fill="url(#cbg)" stroke="#262626"/><path d="M2.5 5.5L5.2 8.8L11.8 -0.8" fill="none" stroke="#f2f2f2" stroke-width="1.3"/></svg>
<div class="t" style="left:835px;top:562px;font-size:12.2px;color:#ebebeb;font-weight:normal;">Ebene drucken</div>
<svg style="left:819px;top:583px;" width="12" height="12" viewBox="0 0 12 12"><defs><linearGradient id="cbg" x1="0" y1="0" x2="0" y2="1"><stop offset="0" stop-color="#5e5e5e"/><stop offset="1" stop-color="#484848"/></linearGradient></defs><rect x="0.5" y="0.5" width="11" height="11" rx="1.2" fill="url(#cbg)" stroke="#262626"/></svg>
<div class="t" style="left:835px;top:582px;font-size:12.2px;color:#ebebeb;font-weight:normal;">Textumfluss bei ausgeblendeten Ebenen unterdrücken</div>
</body></html>
